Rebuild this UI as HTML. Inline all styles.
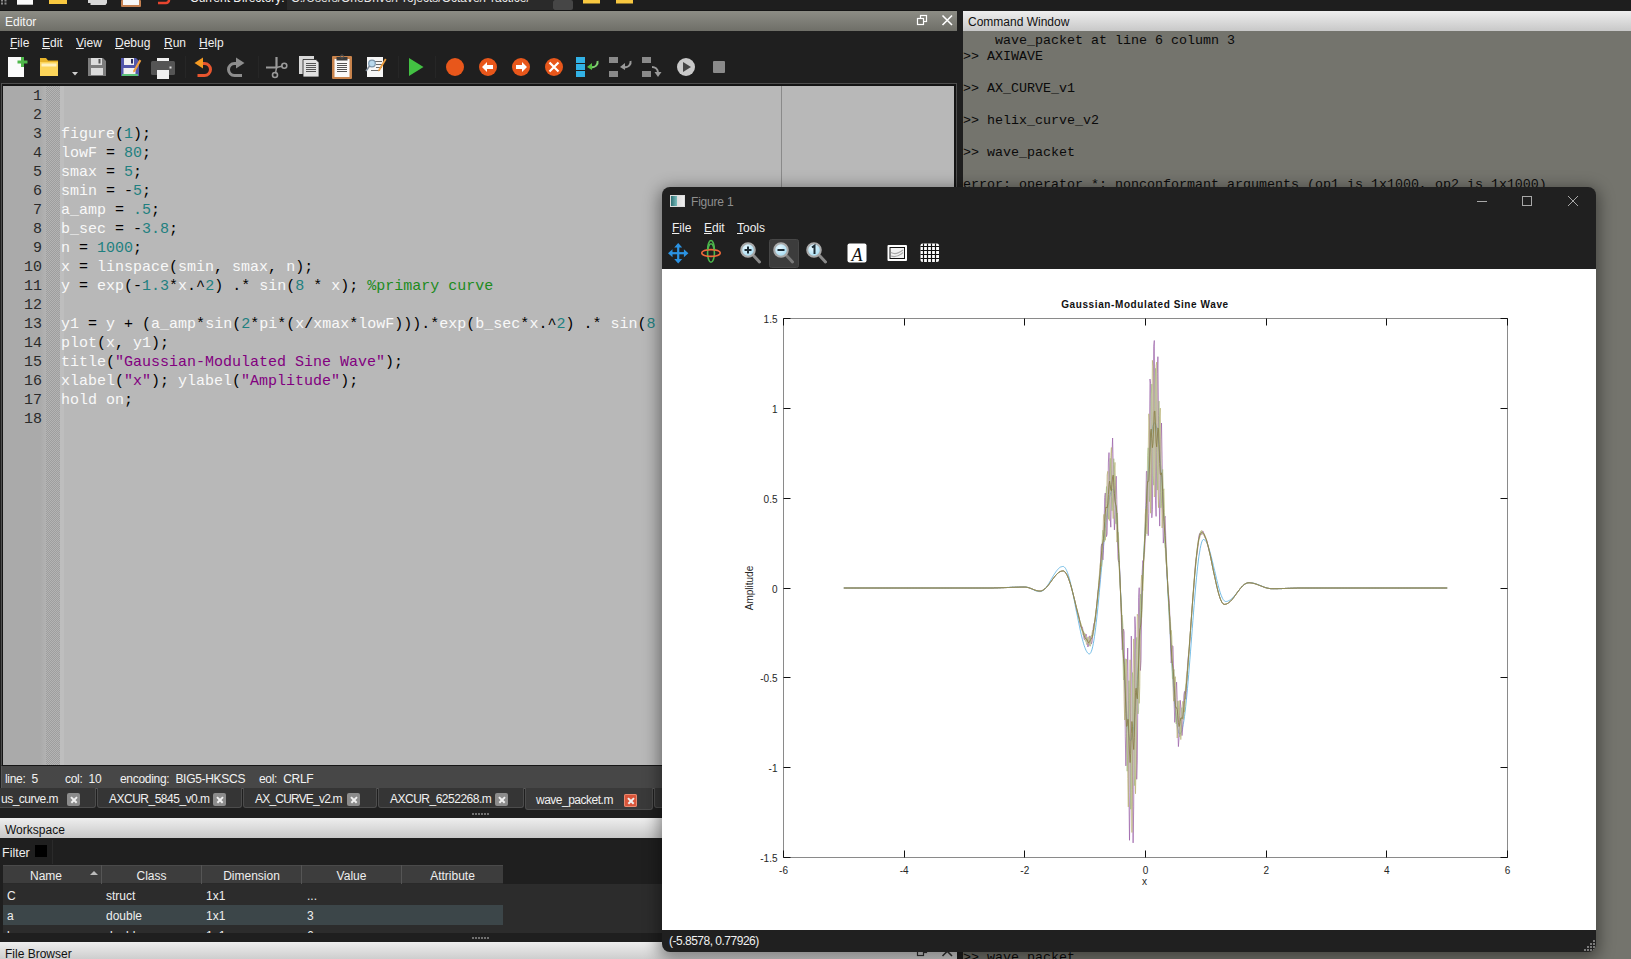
<!DOCTYPE html>
<html><head><meta charset="utf-8">
<style>
*{margin:0;padding:0;box-sizing:border-box}
html,body{width:1631px;height:959px;overflow:hidden;background:#1f1f1f;font-family:"Liberation Sans",sans-serif;position:relative}
.a{position:absolute}
.ttl{background:linear-gradient(#8d8d85,#6f6f68);color:#f6f6f6;font-size:12px;line-height:20px;padding-top:1px}
.ttlL{background:linear-gradient(#eeeeee,#c8c8c8);color:#111;font-size:12px;line-height:20px;padding-top:1px}
.menu span{position:absolute;color:#f0f0f0;font-size:12px;line-height:14px}
.menu span b{font-weight:normal;text-decoration:underline;text-underline-offset:1px}
.code{font-family:"Liberation Mono",monospace;font-size:15px;line-height:19px;white-space:pre;color:#f8f8f8}
.k{color:#000}.n{color:#1f8080}.s{color:#82007f}.c{color:#1d8b1d}
.cmd{font-family:"Liberation Mono",monospace;font-size:13.33px;line-height:16px;white-space:pre;color:#0a0a0a;padding-top:2px}
.ui{font-size:12px;color:#eee;white-space:pre}
.sb{letter-spacing:-0.3px}
.tab{position:absolute;top:788px;height:20px;background:#353535;border:1px solid #4c4c4c;border-top:none;border-radius:0 0 3px 3px}
.tab span{position:absolute;left:0;top:4px;font-size:12px;color:#f0f0f0;white-space:pre;letter-spacing:-0.5px}
.tab i{position:absolute;top:5px;width:13px;height:13px;background:#8c8c8c;border-radius:2px}
.tab i:before,.tab i:after{content:"";position:absolute;left:2.5px;top:5.75px;width:8px;height:1.5px;background:#f0f0f0;transform:rotate(45deg)}
.tab i:after{transform:rotate(-45deg)}
.th{position:absolute;top:0;height:19px;border-right:1px solid #555;font-size:12px;color:#eee;text-align:center;line-height:19px;padding-top:2px}
.td{position:absolute;font-size:12px;color:#eee;line-height:20px;white-space:pre;padding-top:1px}
</style></head><body>

<!-- top strip (main toolbar clipped) -->
<div class="a" style="left:0;top:0;width:1631px;height:11px;background:#1e1e1e"></div>
<svg class="a" style="left:0;top:0" width="660" height="11" viewBox="0 0 660 11">
 <g fill="#8a8a8a"><rect x="1" y="0" width="2" height="1.5"/><rect x="4.5" y="0" width="2" height="1.5"/><rect x="1" y="2.5" width="2" height="2"/><rect x="4.5" y="2.5" width="2" height="2"/></g>
 <rect x="17" y="0" width="16" height="4.7" fill="#fbfbfb"/>
 <rect x="49" y="0" width="18" height="4" fill="#f8c840"/>
 <path d="M88 0h19v3l-1.5 2h-15v-2h-2.5z" fill="#d8d8d8"/>
 <rect x="121" y="0" width="20" height="7" rx="1" fill="#c48050"/>
 <rect x="123" y="0" width="16" height="5" fill="#f8f8f8"/>
 <path d="M158 3h8a3 3 0 0 0 3-3" fill="none" stroke="#e8452e" stroke-width="2.5"/>
 <rect x="287" y="0" width="266" height="10" fill="#2a2a2a"/>
 <rect x="553" y="0" width="20" height="10" rx="2" fill="#464646"/>
 <rect x="583" y="0" width="17" height="3.5" fill="#f8c840"/>
 <rect x="616" y="0" width="17" height="3.5" fill="#f8c840"/>
 <g fill="#f0f0f0">
  <rect x="190" y="0" width="87" height="1.5" opacity=".0"/>
 </g>
</svg>
<div class="a" style="left:190px;top:-9px;font-size:12px;color:#f2f2f2;white-space:pre">Current Directory:</div>
<div class="a" style="left:291px;top:-9px;font-size:12px;color:#e8e8e8;white-space:pre;width:260px;overflow:hidden">C:/Users/OneDrive/Projects/Octave/Practice/</div>
<div class="a" style="left:0;top:10px;width:957px;height:1px;background:#151515"></div>


<!-- ================= EDITOR DOCK ================= -->
<div class="a ttl" style="left:0;top:11px;width:957px;height:20px;padding-left:5px">Editor</div>
<svg class="a" style="left:905px;top:11px" width="52" height="20" viewBox="905 11 52 20">
 <rect x="920.5" y="15.5" width="6" height="6" fill="none" stroke="#fff" stroke-width="1.2"/>
 <rect x="917.5" y="18.5" width="6" height="6" fill="#76766f" stroke="#fff" stroke-width="1.2"/>
 <path d="M942.5 15.5l9.5 9.5M952 15.5l-9.5 9.5" stroke="#fff" stroke-width="1.6"/>
</svg>

<div class="a menu" style="left:0;top:31px;width:957px;height:21px">
 <span style="left:10px;top:5px"><b>F</b>ile</span>
 <span style="left:42px;top:5px"><b>E</b>dit</span>
 <span style="left:76px;top:5px"><b>V</b>iew</span>
 <span style="left:115px;top:5px"><b>D</b>ebug</span>
 <span style="left:164px;top:5px"><b>R</b>un</span>
 <span style="left:199px;top:5px"><b>H</b>elp</span>
</div>
<svg class="a" style="left:0;top:50px" width="740" height="32" viewBox="0 50 740 32">
 <!-- new file -->
 <rect x="8" y="57" width="16" height="20" fill="#fbfbfb"/>
 <path d="M21 57h3v3.5h3.5v3h-3.5v3.5h-3v-3.5h-3.5v-3h3.5z" fill="#4fb84a"/>
 <!-- folder -->
 <path d="M40 58h6l2 2.5h10v15.5h-18z" fill="#e8b42a"/>
 <rect x="40" y="62" width="18" height="14" fill="#fcd55a"/>
 <rect x="41.5" y="63.5" width="15" height="3" fill="#fff4c8" opacity=".9"/>
 <!-- dropdown -->
 <path d="M72 72h6l-3 3.5z" fill="#cfcfcf"/>
 <!-- save grey -->
 <path d="M88 58h15l3 3v15h-18z" fill="#7d7d7d"/>
 <rect x="91" y="58" width="11" height="7" fill="#dcdcdc"/>
 <rect x="98.5" y="59" width="2" height="4.5" fill="#555"/>
 <rect x="91" y="68" width="12" height="7" fill="#dcdcdc"/>
 <!-- save as blue -->
 <path d="M121 58h15l3 3v15h-18z" fill="#5257aa"/>
 <rect x="124" y="58" width="10" height="7" fill="#f1f1f1"/>
 <rect x="131" y="59" width="2" height="4.5" fill="#2a2c60"/>
 <rect x="123.5" y="68" width="12" height="6" fill="#f1f1f1"/>
 <rect x="122" y="74" width="16" height="2" fill="#5cc47c"/>
 <path d="M139.5 59.5l1.8 1.2-6.3 11-1.8 0.8 0.1-2z" fill="#f0a040"/>
 <!-- print -->
 <rect x="157" y="58" width="12" height="5" fill="#f0f0f0"/>
 <rect x="151" y="61" width="24" height="14" rx="1.5" fill="#555"/>
 <rect x="157" y="70" width="12" height="9" fill="#f0f0f0"/>
 <rect x="169.5" y="66.5" width="2" height="2" fill="#ddd"/>
 <!-- separators -->
 <rect x="185" y="56" width="1" height="22" fill="#262626"/>
 <rect x="258" y="56" width="1" height="22" fill="#262626"/>
 <rect x="398" y="56" width="1" height="22" fill="#262626"/>
 <rect x="435" y="56" width="1" height="22" fill="#262626"/>
 <!-- undo -->
 <path d="M201 63.5h3.5a6 6 0 0 1 0 12h-7" fill="none" stroke="#e8552e" stroke-width="3"/>
 <path d="M194.5 63l8.5-5.5v11z" fill="#f49a22"/>
 <!-- redo -->
 <path d="M238 63.5h-3.5a6 6 0 0 0 0 12h7.5" fill="none" stroke="#8d8d8d" stroke-width="3"/>
 <path d="M244.5 63l-8.5-5.5v11z" fill="#8d8d8d"/>
 <!-- scissors -->
 <path d="M276.5 57v10.5h-10.5" fill="none" stroke="#9a9a9a" stroke-width="2.2"/>
 <path d="M276.5 67.5l6-1.5M276.5 67.5l-1 6" stroke="#9a9a9a" stroke-width="1.5"/>
 <circle cx="284.3" cy="65.8" r="2.5" fill="none" stroke="#9a9a9a" stroke-width="1.6"/>
 <circle cx="275" cy="75" r="2.5" fill="none" stroke="#9a9a9a" stroke-width="1.6"/>
 <!-- copy -->
 <rect x="299" y="56" width="15" height="18" fill="#d8d8d8"/>
 <path d="M303 59.5h13l3 3v14.5h-16z" fill="#e2e2e2" stroke="#1f1f1f" stroke-width=".8"/>
 <path d="M306 63.5h10M306 65.5h10M306 67.5h10M306 69.5h10M306 71.5h10" stroke="#555" stroke-width="1"/>
 <!-- paste -->
 <rect x="332" y="56" width="20" height="23" rx="1" fill="#c8834c"/>
 <rect x="334.5" y="59" width="15" height="18" fill="#fafafa"/>
 <rect x="336.5" y="57" width="11" height="3.5" fill="#3a3a3a"/>
 <circle cx="342" cy="56.5" r="1.6" fill="none" stroke="#555" stroke-width="1"/>
 <path d="M337 63.5h10M337 65.5h10M337 67.5h10M337 69.5h10M337 71.5h10" stroke="#555" stroke-width="1"/>
 <!-- find/replace -->
 <rect x="367" y="57" width="16" height="20" fill="#f6f6f6"/>
 <path d="M375 61.5h7M376 64.5h6M376 67.5h6M371 70.5h9" stroke="#6a6a6a" stroke-width="1"/>
 <circle cx="372" cy="63.5" r="3.3" fill="#b8d8ec" stroke="#7d97ad" stroke-width="1.2"/>
 <path d="M369.5 66l-3.5 5" stroke="#7d8a98" stroke-width="1.5"/>
 <path d="M385 58.5l1.5 1-6.5 11-1.8 1 .2-2z" fill="#f0a040"/>
 <!-- run -->
 <path d="M409 58v18l14.5-9z" fill="#43c143"/>
 <!-- debug circles -->
 <circle cx="455" cy="67" r="9" fill="#e8571b"/>
 <circle cx="488" cy="67" r="9" fill="#e8571b"/>
 <path d="M482 67l5-5v3h6v4h-6v3z" fill="#fff"/>
 <circle cx="521" cy="67" r="9" fill="#e8571b"/>
 <path d="M527 67l-5-5v3h-6v4h6v3z" fill="#fff"/>
 <circle cx="554" cy="67" r="9" fill="#e8571b"/>
 <path d="M549.5 62.5l9 9M558.5 62.5l-9 9" stroke="#fff" stroke-width="2.2"/>
 <!-- step blue -->
 <rect x="576" y="57" width="9" height="6" fill="#32b2e6"/>
 <rect x="576" y="64" width="9" height="6" fill="#32b2e6"/>
 <rect x="576" y="71" width="9" height="6" fill="#32b2e6"/>
 <path d="M597.5 61a5 5 0 0 1 -6 6" fill="none" stroke="#7ed070" stroke-width="2"/>
 <path d="M587 67l5-4v7z" fill="#55c040"/>
 <!-- step in grey -->
 <rect x="609" y="57" width="9" height="6" fill="#8a8a8a"/>
 <rect x="609" y="71" width="9" height="6" fill="#8a8a8a"/>
 <path d="M630.5 61a5 5 0 0 1 -6 6" fill="none" stroke="#9a9a9a" stroke-width="2"/>
 <path d="M620 67l5-4v7z" fill="#9a9a9a"/>
 <!-- step out grey -->
 <rect x="642" y="57" width="9" height="6" fill="#8a8a8a"/>
 <rect x="642" y="71" width="9" height="6" fill="#8a8a8a"/>
 <path d="M652 67a6 6 0 0 1 6 5" fill="none" stroke="#9a9a9a" stroke-width="2"/>
 <path d="M654.5 72h7l-3.5 5z" fill="#9a9a9a"/>
 <!-- continue -->
 <circle cx="686" cy="67" r="9" fill="#c9c9c9"/>
 <path d="M683 62v10l8-5z" fill="#444"/>
 <!-- stop -->
 <rect x="713" y="61" width="12" height="12" rx="1" fill="#8a8a8a"/>
</svg>


<!-- editor frame -->
<div class="a" style="left:1px;top:83px;width:956px;height:683px;background:#141414;border:1px solid #4e4e4e;border-bottom:none"></div>
<div class="a" style="left:3px;top:86px;width:951px;height:679px;background:#b8b8b8;overflow:hidden">
  <div class="a" style="left:0;top:0;width:43px;height:679px;background:linear-gradient(90deg,#aaaaaa 0,#aaaaaa 37px,#b2b2b2 43px)"></div>
  <div class="a" style="left:43px;top:0;width:14px;height:679px;background-color:#a9a9a9;background-image:repeating-conic-gradient(#9e9e9e 0 25%,#b4b4b4 0 50%);background-size:2px 2px"></div>
  <div class="a" style="left:57px;top:0;width:4px;height:679px;background:#bebebe"></div>
  <div class="a" style="left:778px;top:0;width:1px;height:679px;background:#8a8a8a"></div>
  <div class="a code" style="left:0;top:1px;width:39px;text-align:right;color:#2a2a2a">1
2
3
4
5
6
7
8
9
10
11
12
13
14
15
16
17
18</div>
  <div class="a code" style="left:58px;top:1px">

figure<span class="k">(</span><span class="n">1</span><span class="k">);</span>
lowF <span class="k">=</span> <span class="n">80</span><span class="k">;</span>
smax <span class="k">=</span> <span class="n">5</span><span class="k">;</span>
smin <span class="k">=</span> <span class="k">-</span><span class="n">5</span><span class="k">;</span>
a_amp <span class="k">=</span> <span class="n">.5</span><span class="k">;</span>
b_sec <span class="k">=</span> <span class="k">-</span><span class="n">3.8</span><span class="k">;</span>
n <span class="k">=</span> <span class="n">1000</span><span class="k">;</span>
x <span class="k">=</span> linspace<span class="k">(</span>smin<span class="k">,</span> smax<span class="k">,</span> n<span class="k">);</span>
y <span class="k">=</span> exp<span class="k">(-</span><span class="n">1.3</span><span class="k">*</span>x<span class="k">.^</span><span class="n">2</span><span class="k">)</span> <span class="k">.*</span> sin<span class="k">(</span><span class="n">8</span> <span class="k">*</span> x<span class="k">);</span> <span class="c">%primary curve</span>

y1 <span class="k">=</span> y <span class="k">+</span> <span class="k">(</span>a_amp<span class="k">*</span>sin<span class="k">(</span><span class="n">2</span><span class="k">*</span>pi<span class="k">*(</span>x<span class="k">/</span>xmax<span class="k">*</span>lowF<span class="k">))).*</span>exp<span class="k">(</span>b_sec<span class="k">*</span>x<span class="k">.^</span><span class="n">2</span><span class="k">)</span> <span class="k">.*</span> sin<span class="k">(</span><span class="n">8</span> <span class="k">*</span> x<span class="k">));</span>
plot<span class="k">(</span>x<span class="k">,</span> y1<span class="k">);</span>
title<span class="k">(</span><span class="s">"Gaussian-Modulated Sine Wave"</span><span class="k">);</span>
xlabel<span class="k">(</span><span class="s">"x"</span><span class="k">);</span> ylabel<span class="k">(</span><span class="s">"Amplitude"</span><span class="k">);</span>
hold on<span class="k">;</span>
</div>
</div>

<!-- status bar -->
<div class="a" style="left:1px;top:765px;width:956px;height:24px;background:#474747;border:1px solid #575757;border-top:1px solid #161616"></div>
<div class="a ui sb" style="left:5px;top:772px;color:#f2f2f2">line:  5</div>
<div class="a ui sb" style="left:65px;top:772px;color:#f2f2f2">col:  10</div>
<div class="a ui sb" style="left:120px;top:772px;color:#f2f2f2">encoding:  BIG5-HKSCS</div>
<div class="a ui sb" style="left:259px;top:772px;color:#f2f2f2">eol:  CRLF</div>

<!-- tabs -->
<div class="tab" style="left:-4px;width:100px"><span style="left:4px">us_curve.m</span><i style="left:70px"></i></div>
<div class="tab" style="left:97px;width:145px"><span style="left:11px">AXCUR_5845_v0.m</span><i style="left:115px"></i></div>
<div class="tab" style="left:243px;width:134px"><span style="left:11px;letter-spacing:-0.8px">AX_CURVE_v2.m</span><i style="left:103px"></i></div>
<div class="tab" style="left:378px;width:146px"><span style="left:11px">AXCUR_6252268.m</span><i style="left:116px"></i></div>
<div class="tab" style="left:525px;top:788px;height:22px;width:128px;background:#3a3a3a"><span style="left:10px;top:5px">wave_packet.m</span><i style="left:98px;top:6px;background:#d9553a;box-shadow:0 0 0 1px #e88a70 inset"></i></div>
<div class="tab" style="left:654px;width:30px"></div>
<div class="a" style="left:472px;top:813px;width:18px;height:2px;background-image:linear-gradient(90deg,#707070 66%,transparent 66%);background-size:3px 2px"></div>

<!-- workspace -->
<div class="a ttlL" style="left:0;top:818px;width:957px;height:20px;padding-left:5px;padding-top:2px">Workspace</div>
<div class="a ui" style="left:2px;top:846px;font-size:12.5px">Filter</div>
<div class="a" style="left:35px;top:845px;width:12px;height:12px;background:#000"></div>
<div class="a" style="left:52px;top:840px;width:1px;height:24px;background:#2a2a2a"></div>
<div class="a" style="left:3px;top:865px;width:954px;height:68px;background:#2c2c2c;overflow:hidden">
  <div class="a" style="left:500px;top:0;width:454px;height:19px;background:#1f1f1f"></div>
  <div class="a" style="left:0;top:0;width:500px;height:19px;background:#3d3d3d;border-top:1px solid #4a4a4a;border-bottom:1px solid #2a2a2a"></div>
  <div class="th" style="left:0;width:99px;padding-right:12px">Name</div>
  <div class="a" style="left:87px;top:6px;width:0;height:0;border-left:4px solid transparent;border-right:4px solid transparent;border-bottom:4px solid #bbb"></div>
  <div class="th" style="left:99px;width:100px">Class</div>
  <div class="th" style="left:199px;width:100px">Dimension</div>
  <div class="th" style="left:299px;width:100px">Value</div>
  <div class="th" style="left:399px;width:101px;border-right:none">Attribute</div>
  <div class="a" style="left:0;top:40px;width:500px;height:20px;background:#3c4649"></div>
  <div class="td" style="left:4px;top:20px">C</div><div class="td" style="left:103px;top:20px">struct</div><div class="td" style="left:203px;top:20px">1x1</div><div class="td" style="left:304px;top:20px">...</div>
  <div class="td" style="left:4px;top:40px">a</div><div class="td" style="left:103px;top:40px">double</div><div class="td" style="left:203px;top:40px">1x1</div><div class="td" style="left:304px;top:40px">3</div>
  <div class="td" style="left:4px;top:60px">b</div><div class="td" style="left:103px;top:60px">double</div><div class="td" style="left:203px;top:60px">1x1</div><div class="td" style="left:304px;top:60px">6</div>
</div>
<div class="a" style="left:472px;top:937px;width:18px;height:2px;background-image:linear-gradient(90deg,#707070 66%,transparent 66%);background-size:3px 2px"></div>

<!-- file browser title -->
<div class="a ttlL" style="left:0;top:942px;width:957px;height:20px;padding-left:5px;padding-top:2px">File Browser</div>
<svg class="a" style="left:905px;top:942px" width="52" height="17" viewBox="905 942 52 17">
 <rect x="920.5" y="946.5" width="6" height="6" fill="none" stroke="#333" stroke-width="1.2"/>
 <rect x="917.5" y="949.5" width="6" height="6" fill="#d4d4d4" stroke="#333" stroke-width="1.2"/>
 <path d="M942.5 946.5l9.5 9.5M952 946.5l-9.5 9.5" stroke="#333" stroke-width="1.6"/>
</svg>

<!-- ================= COMMAND WINDOW ================= -->
<div class="a ttlL" style="left:963px;top:11px;width:668px;height:20px;padding-left:5px">Command Window</div>
<div class="a" style="left:963px;top:31px;width:668px;height:928px;background:#74746d;overflow:hidden">
<div class="a cmd" style="left:0;top:0">    wave_packet at line 6 column 3
&gt;&gt; AXIWAVE

&gt;&gt; AX_CURVE_v1

&gt;&gt; helix_curve_v2

&gt;&gt; wave_packet

error: operator *: nonconformant arguments (op1 is 1x1000, op2 is 1x1000)</div>
<div class="a cmd" style="left:0;top:917px">&gt;&gt; wave_packet</div>
</div>

<!-- ================= FIGURE WINDOW ================= -->
<div class="a" style="left:662px;top:187px;width:934px;height:765px;background:#202020;border-radius:8px;box-shadow:0 4px 16px 3px rgba(0,0,0,.42);overflow:hidden">
  <div class="a" style="left:8px;top:8px;width:15px;height:12px;background:linear-gradient(90deg,#2f6f73 0,#7bb 45%,#ddd 50%,#eee 100%);border:1px solid #ddd"></div>
  <div class="a" style="left:29px;top:8px;font-size:12px;color:#8f8f8f;letter-spacing:-0.2px">Figure 1</div>
  <div class="a" style="left:815px;top:14px;width:10px;height:1px;background:#a8a8a8"></div>
  <div class="a" style="left:860px;top:9px;width:10px;height:10px;border:1px solid #a8a8a8"></div>
  <svg class="a" style="left:900px;top:5px" width="30" height="20" viewBox="1562 192 30 20">
 <path d="M1568 196l10 10M1578 196l-10 10" stroke="#a8a8a8" stroke-width="1"/>
</svg>

  <div class="a menu" style="left:0;top:28px;width:934px;height:25px">
    <span style="left:10px;top:6px"><b>F</b>ile</span>
    <span style="left:42px;top:6px"><b>E</b>dit</span>
    <span style="left:75px;top:6px"><b>T</b>ools</span>
  </div>
  <svg class="a" style="left:0;top:51px" width="300" height="30" viewBox="662 238 300 30">
 <defs>
  <radialGradient id="lens" cx="40%" cy="35%" r="70%"><stop offset="0" stop-color="#e8f8ff"/><stop offset="1" stop-color="#9ed8f0"/></radialGradient>
 </defs>
 <!-- move -->
 <g fill="#2b93e3">
  <rect x="677.1" y="246" width="2.2" height="14"/>
  <rect x="671" y="252.1" width="14" height="2.2"/>
  <path d="M678.2 243l4 4.5h-8z M678.2 263.4l4-4.5h-8z M668 253.2l4.5-4v8z M688.4 253.2l-4.5-4v8z"/>
 </g>
 <!-- rotate -->
 <ellipse cx="711" cy="253" rx="3.4" ry="9.3" fill="none" stroke="#4cb64c" stroke-width="1.6"/>
 <ellipse cx="711" cy="253" rx="9.3" ry="3.4" fill="none" stroke="#f26a3a" stroke-width="1.6"/>
 <path d="M707.6 249.8a3.4 9.3 0 0 1 6.8 0" fill="none" stroke="#4cb64c" stroke-width="1.6"/>
 <!-- pressed button -->
 <rect x="769.5" y="239.5" width="29" height="28" rx="2" fill="#3c3c3c" stroke="#474747"/>
 <!-- zoom in -->
 <path d="M753.5 255.5l6 6.5" stroke="#8a8a8a" stroke-width="3" stroke-linecap="round"/>
 <circle cx="748" cy="250" r="6.8" fill="url(#lens)" stroke="#a9a9a9" stroke-width="2"/>
 <path d="M744.5 250h7M748 246.5v7" stroke="#1b2a33" stroke-width="2"/>
 <!-- zoom out -->
 <path d="M786.5 255.5l6 6.5" stroke="#7a7a7a" stroke-width="3" stroke-linecap="round"/>
 <circle cx="781" cy="250" r="6.8" fill="url(#lens)" stroke="#a9a9a9" stroke-width="2"/>
 <path d="M777.5 250h7" stroke="#1b2a33" stroke-width="2"/>
 <!-- zoom 1 -->
 <path d="M819.5 255.5l6 6.5" stroke="#8a8a8a" stroke-width="3" stroke-linecap="round"/>
 <circle cx="814" cy="250" r="6.8" fill="url(#lens)" stroke="#a9a9a9" stroke-width="2"/>
 <path d="M812 247.5l2.5-1.8v8.3" fill="none" stroke="#1b2a33" stroke-width="2"/>
 <!-- text A -->
 <rect x="847.5" y="243.5" width="19" height="19" rx="2" fill="#fff"/>
 <text x="857" y="260.5" text-anchor="middle" font-family="Liberation Serif" font-style="italic" font-size="18" fill="#111">A</text>
 <!-- image -->
 <rect x="887.5" y="245" width="19.5" height="16" rx="1" fill="#fff"/>
 <rect x="889.5" y="247" width="15.5" height="12" fill="#111"/>
 <rect x="890.5" y="248" width="13.5" height="10" fill="#f2f2f2"/>
 <path d="M891 252.5q5 3 12-2.5M891 256q6 2 12-3.5" fill="none" stroke="#aaa" stroke-width="1.2"/>
 <!-- grid -->
 <rect x="920.5" y="243.5" width="18.5" height="18.5" rx="2" fill="#fff"/>
 <path d="M923.5 243.5v18.5M927.5 243.5v18.5M931.5 243.5v18.5M935.5 243.5v18.5M920.5 246.5h18.5M920.5 250.5h18.5M920.5 254.5h18.5M920.5 258.5h18.5" stroke="#111" stroke-width="1.2"/>
</svg>

  <div class="a" style="left:0;top:82px;width:934px;height:661px;background:#fff">
  <svg class="a" style="left:0;top:0" width="934" height="661" viewBox="662 269 934 661" font-family="Liberation Sans">
<polyline fill="none" stroke="#55aee0" stroke-opacity="0.9" stroke-width="0.9" points="843.8,588.0 844.4,588.0 845.0,588.0 845.6,588.0 846.2,588.0 846.9,588.0 847.5,588.0 848.1,588.0 848.7,588.0 849.3,588.0 849.9,588.0 850.5,588.0 851.1,588.0 851.7,588.0 852.3,588.0 852.9,588.0 853.5,588.0 854.1,588.0 854.7,588.0 855.3,588.0 855.9,588.0 856.5,588.0 857.1,588.0 857.7,588.0 858.3,588.0 858.9,588.0 859.5,588.0 860.1,588.0 860.7,588.0 861.3,588.0 862.0,588.0 862.6,588.0 863.2,588.0 863.8,588.0 864.4,588.0 865.0,588.0 865.6,588.0 866.2,588.0 866.8,588.0 867.4,588.0 868.0,588.0 868.6,588.0 869.2,588.0 869.8,588.0 870.4,588.0 871.0,588.0 871.6,588.0 872.2,588.0 872.8,588.0 873.4,588.0 874.0,588.0 874.6,588.0 875.2,588.0 875.8,588.0 876.4,588.0 877.0,588.0 877.7,588.0 878.3,588.0 878.9,588.0 879.5,588.0 880.1,588.0 880.7,588.0 881.3,588.0 881.9,588.0 882.5,588.0 883.1,588.0 883.7,588.0 884.3,588.0 884.9,588.0 885.5,588.0 886.1,588.0 886.7,588.0 887.3,588.0 887.9,588.0 888.5,588.0 889.1,588.0 889.7,588.0 890.3,588.0 890.9,588.0 891.5,588.0 892.1,588.0 892.8,588.0 893.4,588.0 894.0,588.0 894.6,588.0 895.2,588.0 895.8,588.0 896.4,588.0 897.0,588.0 897.6,588.0 898.2,588.0 898.8,588.0 899.4,588.0 900.0,588.0 900.6,588.0 901.2,588.0 901.8,588.0 902.4,588.0 903.0,588.0 903.6,588.0 904.2,588.0 904.8,588.0 905.4,588.0 906.0,588.0 906.6,588.0 907.2,588.0 907.9,588.0 908.5,588.0 909.1,588.0 909.7,588.0 910.3,588.0 910.9,588.0 911.5,588.0 912.1,588.0 912.7,588.0 913.3,588.0 913.9,588.0 914.5,588.0 915.1,588.0 915.7,588.0 916.3,588.0 916.9,588.0 917.5,588.0 918.1,588.0 918.7,588.0 919.3,588.0 919.9,588.0 920.5,588.0 921.1,588.0 921.7,588.0 922.3,588.0 922.9,588.0 923.6,588.0 924.2,588.0 924.8,588.0 925.4,588.0 926.0,588.0 926.6,588.0 927.2,588.0 927.8,588.0 928.4,588.0 929.0,588.0 929.6,588.0 930.2,588.0 930.8,588.0 931.4,588.0 932.0,588.0 932.6,588.0 933.2,588.0 933.8,588.0 934.4,588.0 935.0,588.0 935.6,588.0 936.2,588.0 936.8,588.0 937.4,588.0 938.0,588.0 938.7,588.0 939.3,588.0 939.9,588.0 940.5,588.0 941.1,588.0 941.7,588.0 942.3,588.0 942.9,588.0 943.5,588.0 944.1,588.0 944.7,588.0 945.3,588.0 945.9,588.0 946.5,588.0 947.1,588.0 947.7,588.0 948.3,588.0 948.9,588.0 949.5,588.0 950.1,588.0 950.7,588.0 951.3,588.0 951.9,588.0 952.5,588.0 953.1,588.0 953.7,588.0 954.4,588.0 955.0,588.0 955.6,588.0 956.2,588.0 956.8,588.0 957.4,588.0 958.0,588.0 958.6,588.0 959.2,588.0 959.8,588.0 960.4,588.0 961.0,588.0 961.6,588.0 962.2,588.0 962.8,588.0 963.4,588.0 964.0,588.0 964.6,588.0 965.2,588.0 965.8,588.0 966.4,588.0 967.0,588.0 967.6,588.0 968.2,588.0 968.8,588.0 969.5,588.0 970.1,588.0 970.7,588.0 971.3,588.0 971.9,588.0 972.5,588.0 973.1,588.0 973.7,588.0 974.3,588.0 974.9,588.0 975.5,588.0 976.1,588.0 976.7,588.0 977.3,588.0 977.9,588.0 978.5,588.0 979.1,588.0 979.7,588.0 980.3,588.0 980.9,588.0 981.5,588.0 982.1,588.0 982.7,588.0 983.3,588.0 983.9,588.0 984.6,588.0 985.2,588.0 985.8,588.0 986.4,588.0 987.0,588.0 987.6,588.0 988.2,588.0 988.8,588.0 989.4,588.0 990.0,588.0 990.6,588.0 991.2,588.0 991.8,588.0 992.4,588.0 993.0,588.0 993.6,588.0 994.2,587.9 994.8,587.9 995.4,587.9 996.0,587.9 996.6,587.9 997.2,587.9 997.8,587.8 998.4,587.8 999.0,587.8 999.6,587.8 1000.3,587.7 1000.9,587.7 1001.5,587.7 1002.1,587.7 1002.7,587.6 1003.3,587.6 1003.9,587.6 1004.5,587.6 1005.1,587.5 1005.7,587.5 1006.3,587.5 1006.9,587.5 1007.5,587.4 1008.1,587.4 1008.7,587.4 1009.3,587.3 1009.9,587.3 1010.5,587.3 1011.1,587.3 1011.7,587.2 1012.3,587.2 1012.9,587.2 1013.5,587.2 1014.1,587.1 1014.7,587.1 1015.4,587.1 1016.0,587.1 1016.6,587.1 1017.2,587.0 1017.8,587.0 1018.4,587.0 1019.0,587.0 1019.6,587.0 1020.2,587.0 1020.8,587.0 1021.4,586.9 1022.0,586.9 1022.6,586.9 1023.2,586.9 1023.8,586.9 1024.4,586.9 1025.0,586.9 1025.6,587.0 1026.2,587.0 1026.8,587.1 1027.4,587.3 1028.0,587.4 1028.6,587.6 1029.2,587.8 1029.8,588.1 1030.4,588.3 1031.1,588.6 1031.7,588.9 1032.3,589.2 1032.9,589.5 1033.5,589.8 1034.1,590.1 1034.7,590.3 1035.3,590.6 1035.9,590.8 1036.5,591.0 1037.1,591.2 1037.7,591.3 1038.3,591.5 1038.9,591.5 1039.5,591.6 1040.1,591.6 1040.7,591.5 1041.3,591.4 1041.9,591.1 1042.5,590.8 1043.1,590.4 1043.7,589.9 1044.3,589.4 1044.9,588.7 1045.5,588.0 1046.2,587.3 1046.8,586.5 1047.4,585.6 1048.0,584.7 1048.6,583.8 1049.2,582.8 1049.8,581.8 1050.4,580.8 1051.0,579.7 1051.6,578.7 1052.2,577.7 1052.8,576.6 1053.4,575.6 1054.0,574.7 1054.6,573.7 1055.2,572.8 1055.8,571.9 1056.4,571.1 1057.0,570.3 1057.6,569.6 1058.2,568.9 1058.8,568.3 1059.4,567.8 1060.0,567.4 1060.6,567.0 1061.3,566.8 1061.9,566.6 1062.5,566.5 1063.1,566.4 1063.7,566.6 1064.3,567.0 1064.9,567.6 1065.5,568.4 1066.1,569.5 1066.7,570.7 1067.3,572.2 1067.9,573.8 1068.5,575.6 1069.1,577.6 1069.7,579.8 1070.3,582.1 1070.9,584.6 1071.5,587.2 1072.1,589.9 1072.7,592.7 1073.3,595.6 1073.9,598.6 1074.5,601.6 1075.1,604.7 1075.7,607.8 1076.3,610.9 1077.0,614.0 1077.6,617.1 1078.2,620.2 1078.8,623.2 1079.4,626.1 1080.0,629.0 1080.6,631.8 1081.2,634.4 1081.8,637.0 1082.4,639.4 1083.0,641.6 1083.6,643.7 1084.2,645.6 1084.8,647.4 1085.4,648.9 1086.0,650.3 1086.6,651.4 1087.2,652.3 1087.8,653.1 1088.4,653.6 1089.0,653.9 1089.6,653.9 1090.2,653.5 1090.8,652.6 1091.4,651.2 1092.1,649.2 1092.7,646.7 1093.3,643.7 1093.9,640.3 1094.5,636.4 1095.1,632.0 1095.7,627.3 1096.3,622.2 1096.9,616.8 1097.5,611.1 1098.1,605.1 1098.7,598.9 1099.3,592.5 1099.9,586.0 1100.5,579.4 1101.1,572.7 1101.7,566.0 1102.3,559.4 1102.9,552.9 1103.5,546.4 1104.1,540.2 1104.7,534.1 1105.3,528.3 1105.9,522.7 1106.5,517.5 1107.1,512.7 1107.8,508.2 1108.4,504.1 1109.0,500.5 1109.6,497.4 1110.2,494.7 1110.8,492.6 1111.4,490.9 1112.0,489.8 1112.6,489.3 1113.2,489.3 1113.8,490.7 1114.4,493.6 1115.0,497.9 1115.6,503.5 1116.2,510.5 1116.8,518.7 1117.4,528.0 1118.0,538.3 1118.6,549.6 1119.2,561.6 1119.8,574.2 1120.4,587.4 1121.0,600.8 1121.6,614.4 1122.2,628.0 1122.9,641.5 1123.5,654.6 1124.1,667.3 1124.7,679.4 1125.3,690.7 1125.9,701.1 1126.5,710.5 1127.1,718.8 1127.7,725.9 1128.3,731.6 1128.9,736.0 1129.5,739.0 1130.1,740.5 1130.7,740.6 1131.3,739.6 1131.9,737.7 1132.5,734.8 1133.1,731.0 1133.7,726.2 1134.3,720.6 1134.9,714.0 1135.5,706.7 1136.1,698.6 1136.7,689.8 1137.3,680.3 1138.0,670.2 1138.6,659.5 1139.2,648.4 1139.8,636.9 1140.4,625.0 1141.0,612.8 1141.6,600.5 1142.2,588.0 1142.8,575.5 1143.4,563.1 1144.0,550.7 1144.6,538.6 1145.2,526.7 1145.8,515.1 1146.4,504.0 1147.0,493.3 1147.6,483.2 1148.2,473.7 1148.8,464.9 1149.4,456.8 1150.0,449.5 1150.6,442.9 1151.2,437.3 1151.8,432.5 1152.4,428.6 1153.0,425.7 1153.7,423.8 1154.3,422.8 1154.9,422.8 1155.5,423.7 1156.1,425.5 1156.7,428.1 1157.3,431.5 1157.9,435.8 1158.5,440.9 1159.1,446.7 1159.7,453.3 1160.3,460.6 1160.9,468.5 1161.5,477.1 1162.1,486.2 1162.7,495.8 1163.3,505.9 1163.9,516.5 1164.5,527.3 1165.1,538.5 1165.7,549.8 1166.3,561.4 1166.9,573.0 1167.5,584.6 1168.1,596.3 1168.8,607.8 1169.4,619.1 1170.0,630.3 1170.6,641.1 1171.2,651.6 1171.8,661.6 1172.4,671.3 1173.0,680.3 1173.6,688.9 1174.2,696.8 1174.8,704.0 1175.4,710.5 1176.0,716.3 1176.6,721.3 1177.2,725.5 1177.8,728.9 1178.4,731.5 1179.0,733.2 1179.6,734.0 1180.2,734.0 1180.8,733.3 1181.4,732.0 1182.0,730.1 1182.6,727.6 1183.2,724.5 1183.9,720.8 1184.5,716.6 1185.1,711.8 1185.7,706.6 1186.3,700.9 1186.9,694.8 1187.5,688.3 1188.1,681.5 1188.7,674.4 1189.3,667.0 1189.9,659.5 1190.5,651.8 1191.1,644.0 1191.7,636.2 1192.3,628.3 1192.9,620.6 1193.5,612.9 1194.1,605.4 1194.7,598.1 1195.3,591.0 1195.9,584.2 1196.5,577.8 1197.1,571.8 1197.7,566.1 1198.3,561.0 1198.9,556.3 1199.6,552.2 1200.2,548.6 1200.8,545.6 1201.4,543.1 1202.0,541.3 1202.6,540.1 1203.2,539.5 1203.8,539.5 1204.4,539.8 1205.0,540.2 1205.6,540.9 1206.2,541.8 1206.8,542.9 1207.4,544.2 1208.0,545.7 1208.6,547.4 1209.2,549.2 1209.8,551.2 1210.4,553.4 1211.0,555.6 1211.6,558.0 1212.2,560.4 1212.8,563.0 1213.4,565.5 1214.0,568.2 1214.7,570.8 1215.3,573.4 1215.9,576.0 1216.5,578.6 1217.1,581.1 1217.7,583.5 1218.3,585.9 1218.9,588.1 1219.5,590.2 1220.1,592.2 1220.7,594.0 1221.3,595.6 1221.9,597.0 1222.5,598.3 1223.1,599.4 1223.7,600.2 1224.3,600.8 1224.9,601.3 1225.5,601.5 1226.1,601.5 1226.7,601.4 1227.3,601.3 1227.9,601.1 1228.5,600.8 1229.1,600.5 1229.7,600.2 1230.4,599.7 1231.0,599.3 1231.6,598.8 1232.2,598.2 1232.8,597.6 1233.4,597.0 1234.0,596.3 1234.6,595.6 1235.2,594.9 1235.8,594.2 1236.4,593.4 1237.0,592.7 1237.6,591.9 1238.2,591.2 1238.8,590.4 1239.4,589.7 1240.0,588.9 1240.6,588.2 1241.2,587.6 1241.8,586.9 1242.4,586.3 1243.0,585.7 1243.6,585.2 1244.2,584.7 1244.8,584.2 1245.5,583.8 1246.1,583.5 1246.7,583.2 1247.3,582.9 1247.9,582.8 1248.5,582.7 1249.1,582.6 1249.7,582.6 1250.3,582.6 1250.9,582.7 1251.5,582.7 1252.1,582.8 1252.7,582.9 1253.3,583.1 1253.9,583.2 1254.5,583.4 1255.1,583.5 1255.7,583.7 1256.3,583.9 1256.9,584.1 1257.5,584.4 1258.1,584.6 1258.7,584.8 1259.3,585.1 1259.9,585.3 1260.6,585.6 1261.2,585.8 1261.8,586.1 1262.4,586.3 1263.0,586.6 1263.6,586.8 1264.2,587.1 1264.8,587.3 1265.4,587.5 1266.0,587.7 1266.6,587.9 1267.2,588.0 1267.8,588.2 1268.4,588.3 1269.0,588.4 1269.6,588.5 1270.2,588.6 1270.8,588.7 1271.4,588.7 1272.0,588.7 1272.6,588.7 1273.2,588.7 1273.8,588.7 1274.4,588.7 1275.0,588.7 1275.6,588.7 1276.3,588.7 1276.9,588.7 1277.5,588.7 1278.1,588.7 1278.7,588.6 1279.3,588.6 1279.9,588.6 1280.5,588.6 1281.1,588.6 1281.7,588.6 1282.3,588.5 1282.9,588.5 1283.5,588.5 1284.1,588.5 1284.7,588.5 1285.3,588.4 1285.9,588.4 1286.5,588.4 1287.1,588.4 1287.7,588.3 1288.3,588.3 1288.9,588.3 1289.5,588.3 1290.1,588.3 1290.7,588.2 1291.4,588.2 1292.0,588.2 1292.6,588.2 1293.2,588.2 1293.8,588.1 1294.4,588.1 1295.0,588.1 1295.6,588.1 1296.2,588.1 1296.8,588.1 1297.4,588.0 1298.0,588.0 1298.6,588.0 1299.2,588.0 1299.8,588.0 1300.4,588.0 1301.0,588.0 1301.6,588.0 1302.2,588.0 1302.8,588.0 1303.4,588.0 1304.0,588.0 1304.6,588.0 1305.2,588.0 1305.8,588.0 1306.4,588.0 1307.1,588.0 1307.7,588.0 1308.3,588.0 1308.9,588.0 1309.5,588.0 1310.1,588.0 1310.7,588.0 1311.3,588.0 1311.9,588.0 1312.5,588.0 1313.1,588.0 1313.7,588.0 1314.3,588.0 1314.9,588.0 1315.5,588.0 1316.1,588.0 1316.7,588.0 1317.3,588.0 1317.9,588.0 1318.5,588.0 1319.1,588.0 1319.7,588.0 1320.3,588.0 1320.9,588.0 1321.5,588.0 1322.2,588.0 1322.8,588.0 1323.4,588.0 1324.0,588.0 1324.6,588.0 1325.2,588.0 1325.8,588.0 1326.4,588.0 1327.0,588.0 1327.6,588.0 1328.2,588.0 1328.8,588.0 1329.4,588.0 1330.0,588.0 1330.6,588.0 1331.2,588.0 1331.8,588.0 1332.4,588.0 1333.0,588.0 1333.6,588.0 1334.2,588.0 1334.8,588.0 1335.4,588.0 1336.0,588.0 1336.6,588.0 1337.3,588.0 1337.9,588.0 1338.5,588.0 1339.1,588.0 1339.7,588.0 1340.3,588.0 1340.9,588.0 1341.5,588.0 1342.1,588.0 1342.7,588.0 1343.3,588.0 1343.9,588.0 1344.5,588.0 1345.1,588.0 1345.7,588.0 1346.3,588.0 1346.9,588.0 1347.5,588.0 1348.1,588.0 1348.7,588.0 1349.3,588.0 1349.9,588.0 1350.5,588.0 1351.1,588.0 1351.7,588.0 1352.3,588.0 1353.0,588.0 1353.6,588.0 1354.2,588.0 1354.8,588.0 1355.4,588.0 1356.0,588.0 1356.6,588.0 1357.2,588.0 1357.8,588.0 1358.4,588.0 1359.0,588.0 1359.6,588.0 1360.2,588.0 1360.8,588.0 1361.4,588.0 1362.0,588.0 1362.6,588.0 1363.2,588.0 1363.8,588.0 1364.4,588.0 1365.0,588.0 1365.6,588.0 1366.2,588.0 1366.8,588.0 1367.4,588.0 1368.1,588.0 1368.7,588.0 1369.3,588.0 1369.9,588.0 1370.5,588.0 1371.1,588.0 1371.7,588.0 1372.3,588.0 1372.9,588.0 1373.5,588.0 1374.1,588.0 1374.7,588.0 1375.3,588.0 1375.9,588.0 1376.5,588.0 1377.1,588.0 1377.7,588.0 1378.3,588.0 1378.9,588.0 1379.5,588.0 1380.1,588.0 1380.7,588.0 1381.3,588.0 1381.9,588.0 1382.5,588.0 1383.1,588.0 1383.8,588.0 1384.4,588.0 1385.0,588.0 1385.6,588.0 1386.2,588.0 1386.8,588.0 1387.4,588.0 1388.0,588.0 1388.6,588.0 1389.2,588.0 1389.8,588.0 1390.4,588.0 1391.0,588.0 1391.6,588.0 1392.2,588.0 1392.8,588.0 1393.4,588.0 1394.0,588.0 1394.6,588.0 1395.2,588.0 1395.8,588.0 1396.4,588.0 1397.0,588.0 1397.6,588.0 1398.2,588.0 1398.9,588.0 1399.5,588.0 1400.1,588.0 1400.7,588.0 1401.3,588.0 1401.9,588.0 1402.5,588.0 1403.1,588.0 1403.7,588.0 1404.3,588.0 1404.9,588.0 1405.5,588.0 1406.1,588.0 1406.7,588.0 1407.3,588.0 1407.9,588.0 1408.5,588.0 1409.1,588.0 1409.7,588.0 1410.3,588.0 1410.9,588.0 1411.5,588.0 1412.1,588.0 1412.7,588.0 1413.3,588.0 1414.0,588.0 1414.6,588.0 1415.2,588.0 1415.8,588.0 1416.4,588.0 1417.0,588.0 1417.6,588.0 1418.2,588.0 1418.8,588.0 1419.4,588.0 1420.0,588.0 1420.6,588.0 1421.2,588.0 1421.8,588.0 1422.4,588.0 1423.0,588.0 1423.6,588.0 1424.2,588.0 1424.8,588.0 1425.4,588.0 1426.0,588.0 1426.6,588.0 1427.2,588.0 1427.8,588.0 1428.4,588.0 1429.0,588.0 1429.7,588.0 1430.3,588.0 1430.9,588.0 1431.5,588.0 1432.1,588.0 1432.7,588.0 1433.3,588.0 1433.9,588.0 1434.5,588.0 1435.1,588.0 1435.7,588.0 1436.3,588.0 1436.9,588.0 1437.5,588.0 1438.1,588.0 1438.7,588.0 1439.3,588.0 1439.9,588.0 1440.5,588.0 1441.1,588.0 1441.7,588.0 1442.3,588.0 1442.9,588.0 1443.5,588.0 1444.1,588.0 1444.8,588.0 1445.4,588.0 1446.0,588.0 1446.6,588.0 1447.2,588.0"/>
<polyline fill="none" stroke="#9a62a8" stroke-opacity="0.8" stroke-width="0.9" points="843.8,588.0 844.4,588.0 845.0,588.0 845.6,588.0 846.2,588.0 846.9,588.0 847.5,588.0 848.1,588.0 848.7,588.0 849.3,588.0 849.9,588.0 850.5,588.0 851.1,588.0 851.7,588.0 852.3,588.0 852.9,588.0 853.5,588.0 854.1,588.0 854.7,588.0 855.3,588.0 855.9,588.0 856.5,588.0 857.1,588.0 857.7,588.0 858.3,588.0 858.9,588.0 859.5,588.0 860.1,588.0 860.7,588.0 861.3,588.0 862.0,588.0 862.6,588.0 863.2,588.0 863.8,588.0 864.4,588.0 865.0,588.0 865.6,588.0 866.2,588.0 866.8,588.0 867.4,588.0 868.0,588.0 868.6,588.0 869.2,588.0 869.8,588.0 870.4,588.0 871.0,588.0 871.6,588.0 872.2,588.0 872.8,588.0 873.4,588.0 874.0,588.0 874.6,588.0 875.2,588.0 875.8,588.0 876.4,588.0 877.0,588.0 877.7,588.0 878.3,588.0 878.9,588.0 879.5,588.0 880.1,588.0 880.7,588.0 881.3,588.0 881.9,588.0 882.5,588.0 883.1,588.0 883.7,588.0 884.3,588.0 884.9,588.0 885.5,588.0 886.1,588.0 886.7,588.0 887.3,588.0 887.9,588.0 888.5,588.0 889.1,588.0 889.7,588.0 890.3,588.0 890.9,588.0 891.5,588.0 892.1,588.0 892.8,588.0 893.4,588.0 894.0,588.0 894.6,588.0 895.2,588.0 895.8,588.0 896.4,588.0 897.0,588.0 897.6,588.0 898.2,588.0 898.8,588.0 899.4,588.0 900.0,588.0 900.6,588.0 901.2,588.0 901.8,588.0 902.4,588.0 903.0,588.0 903.6,588.0 904.2,588.0 904.8,588.0 905.4,588.0 906.0,588.0 906.6,588.0 907.2,588.0 907.9,588.0 908.5,588.0 909.1,588.0 909.7,588.0 910.3,588.0 910.9,588.0 911.5,588.0 912.1,588.0 912.7,588.0 913.3,588.0 913.9,588.0 914.5,588.0 915.1,588.0 915.7,588.0 916.3,588.0 916.9,588.0 917.5,588.0 918.1,588.0 918.7,588.0 919.3,588.0 919.9,588.0 920.5,588.0 921.1,588.0 921.7,588.0 922.3,588.0 922.9,588.0 923.6,588.0 924.2,588.0 924.8,588.0 925.4,588.0 926.0,588.0 926.6,588.0 927.2,588.0 927.8,588.0 928.4,588.0 929.0,588.0 929.6,588.0 930.2,588.0 930.8,588.0 931.4,588.0 932.0,588.0 932.6,588.0 933.2,588.0 933.8,588.0 934.4,588.0 935.0,588.0 935.6,588.0 936.2,588.0 936.8,588.0 937.4,588.0 938.0,588.0 938.7,588.0 939.3,588.0 939.9,588.0 940.5,588.0 941.1,588.0 941.7,588.0 942.3,588.0 942.9,588.0 943.5,588.0 944.1,588.0 944.7,588.0 945.3,588.0 945.9,588.0 946.5,588.0 947.1,588.0 947.7,588.0 948.3,588.0 948.9,588.0 949.5,588.0 950.1,588.0 950.7,588.0 951.3,588.0 951.9,588.0 952.5,588.0 953.1,588.0 953.7,588.0 954.4,588.0 955.0,588.0 955.6,588.0 956.2,588.0 956.8,588.0 957.4,588.0 958.0,588.0 958.6,588.0 959.2,588.0 959.8,588.0 960.4,588.0 961.0,588.0 961.6,588.0 962.2,588.0 962.8,588.0 963.4,588.0 964.0,588.0 964.6,588.0 965.2,588.0 965.8,588.0 966.4,588.0 967.0,588.0 967.6,588.0 968.2,588.0 968.8,588.0 969.5,588.0 970.1,588.0 970.7,588.0 971.3,588.0 971.9,588.0 972.5,588.0 973.1,588.0 973.7,588.0 974.3,588.0 974.9,588.0 975.5,588.0 976.1,588.0 976.7,588.0 977.3,588.0 977.9,588.0 978.5,588.0 979.1,588.0 979.7,588.0 980.3,588.0 980.9,588.0 981.5,588.0 982.1,588.0 982.7,588.0 983.3,588.0 983.9,588.0 984.6,588.0 985.2,588.0 985.8,588.0 986.4,588.0 987.0,588.0 987.6,588.0 988.2,588.0 988.8,588.0 989.4,588.0 990.0,588.0 990.6,588.0 991.2,588.0 991.8,588.0 992.4,588.0 993.0,588.0 993.6,588.0 994.2,587.9 994.8,587.9 995.4,587.9 996.0,587.9 996.6,587.9 997.2,587.9 997.8,587.9 998.4,587.8 999.0,587.8 999.6,587.8 1000.3,587.8 1000.9,587.8 1001.5,587.7 1002.1,587.7 1002.7,587.7 1003.3,587.7 1003.9,587.7 1004.5,587.6 1005.1,587.6 1005.7,587.6 1006.3,587.6 1006.9,587.5 1007.5,587.5 1008.1,587.5 1008.7,587.5 1009.3,587.5 1009.9,587.4 1010.5,587.4 1011.1,587.4 1011.7,587.4 1012.3,587.3 1012.9,587.3 1013.5,587.3 1014.1,587.3 1014.7,587.3 1015.4,587.2 1016.0,587.2 1016.6,587.2 1017.2,587.2 1017.8,587.2 1018.4,587.2 1019.0,587.2 1019.6,587.1 1020.2,587.1 1020.8,587.1 1021.4,587.1 1022.0,587.1 1022.6,587.1 1023.2,587.1 1023.8,587.1 1024.4,587.1 1025.0,587.1 1025.6,587.1 1026.2,587.2 1026.8,587.3 1027.4,587.4 1028.0,587.5 1028.6,587.7 1029.2,587.9 1029.8,588.1 1030.4,588.3 1031.1,588.5 1031.7,588.8 1032.3,589.0 1032.9,589.3 1033.5,589.5 1034.1,589.8 1034.7,590.0 1035.3,590.2 1035.9,590.4 1036.5,590.6 1037.1,590.7 1037.7,590.8 1038.3,590.9 1038.9,591.0 1039.5,591.0 1040.1,591.0 1040.7,591.0 1041.3,590.9 1041.9,590.7 1042.5,590.4 1043.1,590.1 1043.7,589.7 1044.3,589.3 1044.9,588.8 1045.5,588.2 1046.2,587.6 1046.8,587.0 1047.4,586.3 1048.0,585.6 1048.6,584.8 1049.2,584.0 1049.8,583.2 1050.4,582.4 1051.0,581.6 1051.6,580.7 1052.2,579.9 1052.8,579.1 1053.4,578.3 1054.0,577.5 1054.6,576.8 1055.2,576.0 1055.8,575.2 1056.4,574.6 1057.0,574.0 1057.6,573.5 1058.2,573.0 1058.8,572.4 1059.4,571.9 1060.0,571.6 1060.6,571.4 1061.3,571.3 1061.9,571.2 1062.5,571.0 1063.1,570.8 1063.7,570.9 1064.3,571.3 1064.9,572.1 1065.5,572.8 1066.1,573.5 1066.7,574.3 1067.3,575.3 1067.9,576.8 1068.5,578.6 1069.1,580.4 1069.7,582.0 1070.3,583.7 1070.9,585.6 1071.5,587.8 1072.1,590.1 1072.7,592.4 1073.3,594.8 1073.9,597.2 1074.5,599.4 1075.1,601.9 1075.7,604.7 1076.3,607.9 1077.0,610.6 1077.6,612.4 1078.2,613.8 1078.8,615.8 1079.4,619.2 1080.0,623.4 1080.6,626.5 1081.2,627.3 1081.8,626.6 1082.4,627.1 1083.0,630.5 1083.6,635.8 1084.2,639.6 1084.8,639.4 1085.4,636.1 1086.0,634.0 1086.6,636.4 1087.2,642.3 1087.8,647.0 1088.4,646.2 1089.0,640.9 1089.6,636.1 1090.2,636.2 1090.8,640.6 1091.4,643.9 1092.1,641.8 1092.7,634.6 1093.3,627.2 1093.9,623.5 1094.5,622.8 1095.1,621.2 1095.7,616.2 1096.3,609.5 1096.9,603.5 1097.5,596.2 1098.1,590.6 1098.7,588.7 1099.3,586.6 1099.9,578.1 1100.5,562.2 1101.1,547.2 1101.7,543.8 1102.3,552.4 1102.9,559.9 1103.5,550.8 1104.1,523.9 1104.7,497.4 1105.3,493.0 1105.9,513.6 1106.5,536.6 1107.1,533.9 1107.8,500.5 1108.4,462.1 1109.0,452.6 1109.6,480.4 1110.2,518.0 1110.8,527.2 1111.4,496.5 1112.0,453.4 1112.6,438.0 1113.2,464.7 1113.8,508.4 1114.4,529.9 1115.0,514.7 1115.6,485.3 1116.2,476.2 1116.8,499.5 1117.4,536.0 1118.0,558.9 1118.6,561.9 1119.2,561.1 1119.8,571.9 1120.4,588.7 1121.0,604.2 1121.6,630.3 1122.2,649.7 1122.9,646.0 1123.5,629.0 1124.1,631.9 1124.7,675.1 1125.3,736.8 1125.9,765.9 1126.5,733.8 1127.1,671.8 1127.7,648.0 1128.3,700.5 1128.9,792.3 1129.5,840.3 1130.1,795.4 1130.7,695.9 1131.3,636.1 1131.9,675.0 1132.5,776.9 1133.1,842.9 1133.7,806.9 1134.3,699.0 1134.9,616.6 1135.5,629.2 1136.1,713.2 1136.7,779.3 1137.3,760.9 1138.0,674.8 1138.6,597.8 1139.2,587.7 1139.8,632.0 1140.4,670.5 1141.0,660.5 1141.6,613.6 1142.2,572.4 1142.8,560.6 1143.4,563.2 1144.0,554.3 1144.6,551.5 1145.2,539.2 1145.8,505.5 1146.4,471.6 1147.0,471.0 1147.6,506.2 1148.2,535.7 1148.8,513.5 1149.4,442.0 1150.0,379.0 1150.6,383.4 1151.2,452.5 1151.8,517.8 1152.4,509.7 1153.0,428.1 1153.7,346.2 1154.3,340.5 1154.9,415.9 1155.5,500.9 1156.1,516.4 1156.7,452.2 1157.3,373.7 1157.9,356.7 1158.5,415.8 1159.1,495.0 1159.7,526.1 1160.3,492.7 1160.9,439.4 1161.5,423.0 1162.1,458.8 1162.7,513.2 1163.3,543.1 1163.9,536.9 1164.5,518.5 1165.1,516.2 1165.7,535.5 1166.3,560.0 1166.9,574.6 1167.5,581.3 1168.1,591.4 1168.8,596.2 1169.4,603.5 1170.0,622.7 1170.6,648.1 1171.2,663.0 1171.8,658.4 1172.4,645.6 1173.0,646.5 1173.6,671.0 1174.2,704.7 1174.8,722.4 1175.4,712.9 1176.0,690.7 1176.6,682.1 1177.2,699.4 1177.8,729.3 1178.4,746.6 1179.0,738.3 1179.6,715.3 1180.2,700.3 1180.8,706.0 1181.4,724.1 1182.0,735.6 1182.6,729.2 1183.2,710.6 1183.9,694.9 1184.5,691.4 1185.1,696.4 1185.7,699.1 1186.3,692.5 1186.9,679.1 1187.5,666.1 1188.1,658.2 1188.7,653.8 1189.3,648.6 1189.9,640.4 1190.5,630.7 1191.1,621.7 1191.7,613.2 1192.3,604.9 1192.9,597.9 1193.5,591.3 1194.1,583.3 1194.7,574.0 1195.3,565.5 1195.9,559.8 1196.5,556.6 1197.1,553.5 1197.7,548.5 1198.3,541.8 1198.9,536.2 1199.6,533.6 1200.2,534.0 1200.8,535.0 1201.4,534.6 1202.0,532.7 1202.6,531.1 1203.2,531.3 1203.8,533.6 1204.4,536.2 1205.0,537.9 1205.6,538.4 1206.2,538.8 1206.8,540.3 1207.4,543.0 1208.0,546.1 1208.6,548.9 1209.2,551.0 1209.8,553.1 1210.4,555.7 1211.0,558.7 1211.6,561.9 1212.2,565.0 1212.8,567.9 1213.4,570.7 1214.0,573.7 1214.7,576.6 1215.3,579.5 1215.9,582.3 1216.5,585.0 1217.1,587.6 1217.7,590.0 1218.3,592.2 1218.9,594.4 1219.5,596.5 1220.1,598.3 1220.7,599.8 1221.3,601.0 1221.9,602.1 1222.5,603.1 1223.1,603.8 1223.7,604.3 1224.3,604.4 1224.9,604.3 1225.5,604.2 1226.1,604.0 1226.7,603.9 1227.3,603.6 1227.9,603.3 1228.5,602.8 1229.1,602.4 1229.7,601.9 1230.4,601.3 1231.0,600.7 1231.6,600.1 1232.2,599.4 1232.8,598.6 1233.4,597.9 1234.0,597.1 1234.6,596.3 1235.2,595.5 1235.8,594.6 1236.4,593.8 1237.0,592.9 1237.6,592.1 1238.2,591.3 1238.8,590.5 1239.4,589.7 1240.0,588.9 1240.6,588.1 1241.2,587.4 1241.8,586.8 1242.4,586.1 1243.0,585.5 1243.6,585.0 1244.2,584.5 1244.8,584.1 1245.5,583.7 1246.1,583.4 1246.7,583.2 1247.3,583.0 1247.9,582.8 1248.5,582.8 1249.1,582.8 1249.7,582.8 1250.3,582.9 1250.9,582.9 1251.5,583.0 1252.1,583.1 1252.7,583.2 1253.3,583.3 1253.9,583.5 1254.5,583.6 1255.1,583.8 1255.7,584.0 1256.3,584.2 1256.9,584.4 1257.5,584.6 1258.1,584.9 1258.7,585.1 1259.3,585.3 1259.9,585.6 1260.6,585.8 1261.2,586.0 1261.8,586.3 1262.4,586.5 1263.0,586.7 1263.6,587.0 1264.2,587.2 1264.8,587.4 1265.4,587.6 1266.0,587.8 1266.6,587.9 1267.2,588.1 1267.8,588.2 1268.4,588.3 1269.0,588.5 1269.6,588.5 1270.2,588.6 1270.8,588.7 1271.4,588.7 1272.0,588.7 1272.6,588.7 1273.2,588.7 1273.8,588.7 1274.4,588.7 1275.0,588.7 1275.6,588.7 1276.3,588.7 1276.9,588.7 1277.5,588.7 1278.1,588.7 1278.7,588.6 1279.3,588.6 1279.9,588.6 1280.5,588.6 1281.1,588.6 1281.7,588.6 1282.3,588.5 1282.9,588.5 1283.5,588.5 1284.1,588.5 1284.7,588.5 1285.3,588.4 1285.9,588.4 1286.5,588.4 1287.1,588.4 1287.7,588.3 1288.3,588.3 1288.9,588.3 1289.5,588.3 1290.1,588.3 1290.7,588.2 1291.4,588.2 1292.0,588.2 1292.6,588.2 1293.2,588.2 1293.8,588.1 1294.4,588.1 1295.0,588.1 1295.6,588.1 1296.2,588.1 1296.8,588.1 1297.4,588.0 1298.0,588.0 1298.6,588.0 1299.2,588.0 1299.8,588.0 1300.4,588.0 1301.0,588.0 1301.6,588.0 1302.2,588.0 1302.8,588.0 1303.4,588.0 1304.0,588.0 1304.6,588.0 1305.2,588.0 1305.8,588.0 1306.4,588.0 1307.1,588.0 1307.7,588.0 1308.3,588.0 1308.9,588.0 1309.5,588.0 1310.1,588.0 1310.7,588.0 1311.3,588.0 1311.9,588.0 1312.5,588.0 1313.1,588.0 1313.7,588.0 1314.3,588.0 1314.9,588.0 1315.5,588.0 1316.1,588.0 1316.7,588.0 1317.3,588.0 1317.9,588.0 1318.5,588.0 1319.1,588.0 1319.7,588.0 1320.3,588.0 1320.9,588.0 1321.5,588.0 1322.2,588.0 1322.8,588.0 1323.4,588.0 1324.0,588.0 1324.6,588.0 1325.2,588.0 1325.8,588.0 1326.4,588.0 1327.0,588.0 1327.6,588.0 1328.2,588.0 1328.8,588.0 1329.4,588.0 1330.0,588.0 1330.6,588.0 1331.2,588.0 1331.8,588.0 1332.4,588.0 1333.0,588.0 1333.6,588.0 1334.2,588.0 1334.8,588.0 1335.4,588.0 1336.0,588.0 1336.6,588.0 1337.3,588.0 1337.9,588.0 1338.5,588.0 1339.1,588.0 1339.7,588.0 1340.3,588.0 1340.9,588.0 1341.5,588.0 1342.1,588.0 1342.7,588.0 1343.3,588.0 1343.9,588.0 1344.5,588.0 1345.1,588.0 1345.7,588.0 1346.3,588.0 1346.9,588.0 1347.5,588.0 1348.1,588.0 1348.7,588.0 1349.3,588.0 1349.9,588.0 1350.5,588.0 1351.1,588.0 1351.7,588.0 1352.3,588.0 1353.0,588.0 1353.6,588.0 1354.2,588.0 1354.8,588.0 1355.4,588.0 1356.0,588.0 1356.6,588.0 1357.2,588.0 1357.8,588.0 1358.4,588.0 1359.0,588.0 1359.6,588.0 1360.2,588.0 1360.8,588.0 1361.4,588.0 1362.0,588.0 1362.6,588.0 1363.2,588.0 1363.8,588.0 1364.4,588.0 1365.0,588.0 1365.6,588.0 1366.2,588.0 1366.8,588.0 1367.4,588.0 1368.1,588.0 1368.7,588.0 1369.3,588.0 1369.9,588.0 1370.5,588.0 1371.1,588.0 1371.7,588.0 1372.3,588.0 1372.9,588.0 1373.5,588.0 1374.1,588.0 1374.7,588.0 1375.3,588.0 1375.9,588.0 1376.5,588.0 1377.1,588.0 1377.7,588.0 1378.3,588.0 1378.9,588.0 1379.5,588.0 1380.1,588.0 1380.7,588.0 1381.3,588.0 1381.9,588.0 1382.5,588.0 1383.1,588.0 1383.8,588.0 1384.4,588.0 1385.0,588.0 1385.6,588.0 1386.2,588.0 1386.8,588.0 1387.4,588.0 1388.0,588.0 1388.6,588.0 1389.2,588.0 1389.8,588.0 1390.4,588.0 1391.0,588.0 1391.6,588.0 1392.2,588.0 1392.8,588.0 1393.4,588.0 1394.0,588.0 1394.6,588.0 1395.2,588.0 1395.8,588.0 1396.4,588.0 1397.0,588.0 1397.6,588.0 1398.2,588.0 1398.9,588.0 1399.5,588.0 1400.1,588.0 1400.7,588.0 1401.3,588.0 1401.9,588.0 1402.5,588.0 1403.1,588.0 1403.7,588.0 1404.3,588.0 1404.9,588.0 1405.5,588.0 1406.1,588.0 1406.7,588.0 1407.3,588.0 1407.9,588.0 1408.5,588.0 1409.1,588.0 1409.7,588.0 1410.3,588.0 1410.9,588.0 1411.5,588.0 1412.1,588.0 1412.7,588.0 1413.3,588.0 1414.0,588.0 1414.6,588.0 1415.2,588.0 1415.8,588.0 1416.4,588.0 1417.0,588.0 1417.6,588.0 1418.2,588.0 1418.8,588.0 1419.4,588.0 1420.0,588.0 1420.6,588.0 1421.2,588.0 1421.8,588.0 1422.4,588.0 1423.0,588.0 1423.6,588.0 1424.2,588.0 1424.8,588.0 1425.4,588.0 1426.0,588.0 1426.6,588.0 1427.2,588.0 1427.8,588.0 1428.4,588.0 1429.0,588.0 1429.7,588.0 1430.3,588.0 1430.9,588.0 1431.5,588.0 1432.1,588.0 1432.7,588.0 1433.3,588.0 1433.9,588.0 1434.5,588.0 1435.1,588.0 1435.7,588.0 1436.3,588.0 1436.9,588.0 1437.5,588.0 1438.1,588.0 1438.7,588.0 1439.3,588.0 1439.9,588.0 1440.5,588.0 1441.1,588.0 1441.7,588.0 1442.3,588.0 1442.9,588.0 1443.5,588.0 1444.1,588.0 1444.8,588.0 1445.4,588.0 1446.0,588.0 1446.6,588.0 1447.2,588.0"/>
<polyline fill="none" stroke="#b4ad6a" stroke-opacity="0.7" stroke-width="0.9" points="843.8,588.0 844.4,588.0 845.0,588.0 845.6,588.0 846.2,588.0 846.9,588.0 847.5,588.0 848.1,588.0 848.7,588.0 849.3,588.0 849.9,588.0 850.5,588.0 851.1,588.0 851.7,588.0 852.3,588.0 852.9,588.0 853.5,588.0 854.1,588.0 854.7,588.0 855.3,588.0 855.9,588.0 856.5,588.0 857.1,588.0 857.7,588.0 858.3,588.0 858.9,588.0 859.5,588.0 860.1,588.0 860.7,588.0 861.3,588.0 862.0,588.0 862.6,588.0 863.2,588.0 863.8,588.0 864.4,588.0 865.0,588.0 865.6,588.0 866.2,588.0 866.8,588.0 867.4,588.0 868.0,588.0 868.6,588.0 869.2,588.0 869.8,588.0 870.4,588.0 871.0,588.0 871.6,588.0 872.2,588.0 872.8,588.0 873.4,588.0 874.0,588.0 874.6,588.0 875.2,588.0 875.8,588.0 876.4,588.0 877.0,588.0 877.7,588.0 878.3,588.0 878.9,588.0 879.5,588.0 880.1,588.0 880.7,588.0 881.3,588.0 881.9,588.0 882.5,588.0 883.1,588.0 883.7,588.0 884.3,588.0 884.9,588.0 885.5,588.0 886.1,588.0 886.7,588.0 887.3,588.0 887.9,588.0 888.5,588.0 889.1,588.0 889.7,588.0 890.3,588.0 890.9,588.0 891.5,588.0 892.1,588.0 892.8,588.0 893.4,588.0 894.0,588.0 894.6,588.0 895.2,588.0 895.8,588.0 896.4,588.0 897.0,588.0 897.6,588.0 898.2,588.0 898.8,588.0 899.4,588.0 900.0,588.0 900.6,588.0 901.2,588.0 901.8,588.0 902.4,588.0 903.0,588.0 903.6,588.0 904.2,588.0 904.8,588.0 905.4,588.0 906.0,588.0 906.6,588.0 907.2,588.0 907.9,588.0 908.5,588.0 909.1,588.0 909.7,588.0 910.3,588.0 910.9,588.0 911.5,588.0 912.1,588.0 912.7,588.0 913.3,588.0 913.9,588.0 914.5,588.0 915.1,588.0 915.7,588.0 916.3,588.0 916.9,588.0 917.5,588.0 918.1,588.0 918.7,588.0 919.3,588.0 919.9,588.0 920.5,588.0 921.1,588.0 921.7,588.0 922.3,588.0 922.9,588.0 923.6,588.0 924.2,588.0 924.8,588.0 925.4,588.0 926.0,588.0 926.6,588.0 927.2,588.0 927.8,588.0 928.4,588.0 929.0,588.0 929.6,588.0 930.2,588.0 930.8,588.0 931.4,588.0 932.0,588.0 932.6,588.0 933.2,588.0 933.8,588.0 934.4,588.0 935.0,588.0 935.6,588.0 936.2,588.0 936.8,588.0 937.4,588.0 938.0,588.0 938.7,588.0 939.3,588.0 939.9,588.0 940.5,588.0 941.1,588.0 941.7,588.0 942.3,588.0 942.9,588.0 943.5,588.0 944.1,588.0 944.7,588.0 945.3,588.0 945.9,588.0 946.5,588.0 947.1,588.0 947.7,588.0 948.3,588.0 948.9,588.0 949.5,588.0 950.1,588.0 950.7,588.0 951.3,588.0 951.9,588.0 952.5,588.0 953.1,588.0 953.7,588.0 954.4,588.0 955.0,588.0 955.6,588.0 956.2,588.0 956.8,588.0 957.4,588.0 958.0,588.0 958.6,588.0 959.2,588.0 959.8,588.0 960.4,588.0 961.0,588.0 961.6,588.0 962.2,588.0 962.8,588.0 963.4,588.0 964.0,588.0 964.6,588.0 965.2,588.0 965.8,588.0 966.4,588.0 967.0,588.0 967.6,588.0 968.2,588.0 968.8,588.0 969.5,588.0 970.1,588.0 970.7,588.0 971.3,588.0 971.9,588.0 972.5,588.0 973.1,588.0 973.7,588.0 974.3,588.0 974.9,588.0 975.5,588.0 976.1,588.0 976.7,588.0 977.3,588.0 977.9,588.0 978.5,588.0 979.1,588.0 979.7,588.0 980.3,588.0 980.9,588.0 981.5,588.0 982.1,588.0 982.7,588.0 983.3,588.0 983.9,588.0 984.6,588.0 985.2,588.0 985.8,588.0 986.4,588.0 987.0,588.0 987.6,588.0 988.2,588.0 988.8,588.0 989.4,588.0 990.0,588.0 990.6,588.0 991.2,588.0 991.8,588.0 992.4,588.0 993.0,588.0 993.6,588.0 994.2,587.9 994.8,587.9 995.4,587.9 996.0,587.9 996.6,587.9 997.2,587.9 997.8,587.9 998.4,587.8 999.0,587.8 999.6,587.8 1000.3,587.8 1000.9,587.8 1001.5,587.7 1002.1,587.7 1002.7,587.7 1003.3,587.7 1003.9,587.7 1004.5,587.6 1005.1,587.6 1005.7,587.6 1006.3,587.6 1006.9,587.5 1007.5,587.5 1008.1,587.5 1008.7,587.5 1009.3,587.5 1009.9,587.4 1010.5,587.4 1011.1,587.4 1011.7,587.4 1012.3,587.3 1012.9,587.3 1013.5,587.3 1014.1,587.3 1014.7,587.3 1015.4,587.2 1016.0,587.2 1016.6,587.2 1017.2,587.2 1017.8,587.2 1018.4,587.2 1019.0,587.2 1019.6,587.1 1020.2,587.1 1020.8,587.1 1021.4,587.1 1022.0,587.1 1022.6,587.1 1023.2,587.1 1023.8,587.1 1024.4,587.1 1025.0,587.1 1025.6,587.1 1026.2,587.2 1026.8,587.3 1027.4,587.4 1028.0,587.5 1028.6,587.7 1029.2,587.9 1029.8,588.1 1030.4,588.3 1031.1,588.5 1031.7,588.8 1032.3,589.0 1032.9,589.3 1033.5,589.5 1034.1,589.8 1034.7,590.0 1035.3,590.2 1035.9,590.4 1036.5,590.6 1037.1,590.7 1037.7,590.8 1038.3,590.9 1038.9,591.0 1039.5,591.0 1040.1,591.0 1040.7,591.0 1041.3,590.9 1041.9,590.7 1042.5,590.4 1043.1,590.1 1043.7,589.7 1044.3,589.3 1044.9,588.8 1045.5,588.2 1046.2,587.6 1046.8,587.0 1047.4,586.3 1048.0,585.6 1048.6,584.8 1049.2,584.0 1049.8,583.2 1050.4,582.4 1051.0,581.6 1051.6,580.7 1052.2,579.9 1052.8,579.1 1053.4,578.3 1054.0,577.5 1054.6,576.7 1055.2,576.0 1055.8,575.3 1056.4,574.7 1057.0,574.0 1057.6,573.4 1058.2,572.8 1058.8,572.4 1059.4,572.1 1060.0,571.8 1060.6,571.5 1061.3,571.2 1061.9,570.9 1062.5,570.8 1063.1,570.9 1063.7,571.2 1064.3,571.6 1064.9,571.9 1065.5,572.4 1066.1,573.2 1066.7,574.4 1067.3,575.8 1067.9,577.2 1068.5,578.6 1069.1,580.0 1069.7,581.7 1070.3,583.7 1070.9,585.8 1071.5,588.0 1072.1,590.2 1072.7,592.4 1073.3,594.7 1073.9,597.1 1074.5,599.7 1075.1,602.5 1075.7,605.1 1076.3,607.2 1077.0,609.2 1077.6,611.5 1078.2,614.8 1078.8,618.3 1079.4,621.0 1080.0,622.3 1080.6,622.8 1081.2,624.3 1081.8,627.7 1082.4,632.1 1083.0,635.1 1083.6,635.2 1084.2,633.4 1084.8,633.0 1085.4,635.9 1086.0,641.0 1086.6,644.5 1087.2,643.6 1087.8,639.6 1088.4,636.7 1089.0,638.2 1089.6,643.0 1090.2,646.3 1090.8,644.4 1091.4,638.3 1092.1,632.5 1092.7,630.3 1093.3,631.0 1093.9,630.5 1094.5,626.3 1095.1,619.5 1095.7,613.3 1096.3,608.8 1096.9,603.7 1097.5,599.3 1098.1,595.1 1098.7,587.7 1099.3,576.3 1099.9,565.9 1100.5,562.2 1101.1,565.3 1101.7,566.3 1102.3,555.8 1102.9,534.7 1103.5,516.2 1104.1,514.2 1104.7,528.1 1105.3,540.3 1105.9,532.2 1106.5,503.3 1107.1,475.0 1107.8,471.3 1108.4,494.4 1109.0,520.2 1109.6,520.4 1110.2,490.4 1110.8,455.5 1111.4,447.5 1112.0,473.2 1112.6,507.6 1113.2,518.6 1113.8,498.0 1114.4,469.0 1115.0,462.4 1115.6,486.9 1116.2,522.3 1116.8,542.1 1117.4,539.9 1118.0,532.2 1118.6,537.8 1119.2,557.4 1119.8,577.3 1120.4,590.9 1121.0,608.5 1121.6,615.7 1122.2,615.1 1122.9,625.4 1123.5,659.0 1124.1,701.4 1124.7,720.0 1125.3,698.9 1125.9,663.0 1126.5,659.2 1127.1,708.7 1127.7,778.3 1128.3,806.9 1128.9,765.6 1129.5,692.3 1130.1,659.8 1130.7,705.1 1131.3,789.5 1131.9,832.5 1132.5,789.4 1133.1,696.9 1133.7,638.9 1134.3,665.0 1134.9,743.7 1135.5,793.8 1136.1,763.9 1136.7,679.5 1137.3,614.2 1138.0,616.3 1138.6,666.5 1139.2,703.4 1139.8,686.7 1140.4,631.8 1141.0,585.4 1141.6,575.1 1142.2,587.1 1142.8,590.5 1143.4,574.3 1144.0,554.3 1144.6,537.2 1145.2,515.0 1145.8,509.0 1146.4,523.8 1147.0,533.9 1147.6,509.9 1148.2,456.0 1148.8,413.8 1149.4,422.4 1150.0,473.6 1150.6,513.2 1151.2,492.9 1151.8,421.2 1152.4,360.3 1153.0,366.4 1153.7,433.5 1154.3,496.9 1154.9,495.4 1155.5,430.8 1156.1,365.7 1156.7,362.1 1157.3,422.5 1157.9,490.7 1158.5,507.7 1159.1,467.2 1159.7,416.7 1160.3,408.1 1160.9,449.6 1161.5,503.7 1162.1,528.0 1162.7,514.5 1163.3,491.2 1163.9,488.8 1164.5,512.3 1165.1,542.5 1165.7,560.2 1166.3,564.5 1166.9,568.3 1167.5,579.7 1168.1,589.4 1168.8,603.1 1169.4,621.5 1170.0,634.2 1170.6,634.5 1171.2,630.3 1171.8,636.8 1172.4,660.1 1173.0,687.9 1173.6,701.2 1174.2,693.3 1174.8,678.1 1175.4,676.7 1176.0,696.8 1176.6,724.4 1177.2,738.0 1177.8,729.0 1178.4,709.8 1179.0,700.7 1179.6,710.7 1180.2,729.6 1180.8,739.6 1181.4,731.9 1182.0,714.3 1182.6,701.5 1183.2,701.5 1183.9,708.9 1184.5,712.1 1185.1,705.0 1185.7,691.1 1186.3,678.7 1186.9,672.3 1187.5,669.9 1188.1,666.0 1188.7,657.9 1189.3,647.4 1189.9,637.5 1190.5,629.4 1191.1,621.8 1191.7,613.7 1192.3,606.1 1192.9,597.9 1193.5,588.8 1194.1,580.2 1194.7,573.7 1195.3,568.9 1195.9,564.1 1196.5,557.6 1197.1,550.1 1197.7,543.7 1198.3,540.2 1198.9,539.1 1199.6,538.2 1200.2,536.0 1200.8,532.8 1201.4,530.6 1202.0,530.7 1202.6,532.5 1203.2,534.6 1203.8,535.5 1204.4,535.4 1205.0,535.5 1205.6,536.7 1206.2,539.2 1206.8,542.0 1207.4,544.3 1208.0,546.1 1208.6,547.8 1209.2,550.2 1209.8,553.1 1210.4,556.2 1211.0,559.2 1211.6,562.0 1212.2,564.7 1212.8,567.6 1213.4,570.7 1214.0,573.7 1214.7,576.7 1215.3,579.5 1215.9,582.3 1216.5,585.0 1217.1,587.5 1217.7,590.0 1218.3,592.4 1218.9,594.5 1219.5,596.4 1220.1,598.1 1220.7,599.7 1221.3,601.1 1221.9,602.3 1222.5,603.2 1223.1,603.8 1223.7,604.1 1224.3,604.3 1224.9,604.3 1225.5,604.3 1226.1,604.1 1226.7,603.9 1227.3,603.6 1227.9,603.2 1228.5,602.8 1229.1,602.4 1229.7,601.9 1230.4,601.3 1231.0,600.7 1231.6,600.0 1232.2,599.3 1232.8,598.6 1233.4,597.9 1234.0,597.1 1234.6,596.3 1235.2,595.5 1235.8,594.6 1236.4,593.8 1237.0,592.9 1237.6,592.1 1238.2,591.3 1238.8,590.5 1239.4,589.7 1240.0,588.9 1240.6,588.1 1241.2,587.4 1241.8,586.8 1242.4,586.1 1243.0,585.5 1243.6,585.0 1244.2,584.5 1244.8,584.1 1245.5,583.7 1246.1,583.4 1246.7,583.2 1247.3,583.0 1247.9,582.8 1248.5,582.8 1249.1,582.8 1249.7,582.8 1250.3,582.9 1250.9,582.9 1251.5,583.0 1252.1,583.1 1252.7,583.2 1253.3,583.3 1253.9,583.5 1254.5,583.6 1255.1,583.8 1255.7,584.0 1256.3,584.2 1256.9,584.4 1257.5,584.6 1258.1,584.9 1258.7,585.1 1259.3,585.3 1259.9,585.6 1260.6,585.8 1261.2,586.0 1261.8,586.3 1262.4,586.5 1263.0,586.7 1263.6,587.0 1264.2,587.2 1264.8,587.4 1265.4,587.6 1266.0,587.8 1266.6,587.9 1267.2,588.1 1267.8,588.2 1268.4,588.3 1269.0,588.5 1269.6,588.5 1270.2,588.6 1270.8,588.7 1271.4,588.7 1272.0,588.7 1272.6,588.7 1273.2,588.7 1273.8,588.7 1274.4,588.7 1275.0,588.7 1275.6,588.7 1276.3,588.7 1276.9,588.7 1277.5,588.7 1278.1,588.7 1278.7,588.6 1279.3,588.6 1279.9,588.6 1280.5,588.6 1281.1,588.6 1281.7,588.6 1282.3,588.5 1282.9,588.5 1283.5,588.5 1284.1,588.5 1284.7,588.5 1285.3,588.4 1285.9,588.4 1286.5,588.4 1287.1,588.4 1287.7,588.3 1288.3,588.3 1288.9,588.3 1289.5,588.3 1290.1,588.3 1290.7,588.2 1291.4,588.2 1292.0,588.2 1292.6,588.2 1293.2,588.2 1293.8,588.1 1294.4,588.1 1295.0,588.1 1295.6,588.1 1296.2,588.1 1296.8,588.1 1297.4,588.0 1298.0,588.0 1298.6,588.0 1299.2,588.0 1299.8,588.0 1300.4,588.0 1301.0,588.0 1301.6,588.0 1302.2,588.0 1302.8,588.0 1303.4,588.0 1304.0,588.0 1304.6,588.0 1305.2,588.0 1305.8,588.0 1306.4,588.0 1307.1,588.0 1307.7,588.0 1308.3,588.0 1308.9,588.0 1309.5,588.0 1310.1,588.0 1310.7,588.0 1311.3,588.0 1311.9,588.0 1312.5,588.0 1313.1,588.0 1313.7,588.0 1314.3,588.0 1314.9,588.0 1315.5,588.0 1316.1,588.0 1316.7,588.0 1317.3,588.0 1317.9,588.0 1318.5,588.0 1319.1,588.0 1319.7,588.0 1320.3,588.0 1320.9,588.0 1321.5,588.0 1322.2,588.0 1322.8,588.0 1323.4,588.0 1324.0,588.0 1324.6,588.0 1325.2,588.0 1325.8,588.0 1326.4,588.0 1327.0,588.0 1327.6,588.0 1328.2,588.0 1328.8,588.0 1329.4,588.0 1330.0,588.0 1330.6,588.0 1331.2,588.0 1331.8,588.0 1332.4,588.0 1333.0,588.0 1333.6,588.0 1334.2,588.0 1334.8,588.0 1335.4,588.0 1336.0,588.0 1336.6,588.0 1337.3,588.0 1337.9,588.0 1338.5,588.0 1339.1,588.0 1339.7,588.0 1340.3,588.0 1340.9,588.0 1341.5,588.0 1342.1,588.0 1342.7,588.0 1343.3,588.0 1343.9,588.0 1344.5,588.0 1345.1,588.0 1345.7,588.0 1346.3,588.0 1346.9,588.0 1347.5,588.0 1348.1,588.0 1348.7,588.0 1349.3,588.0 1349.9,588.0 1350.5,588.0 1351.1,588.0 1351.7,588.0 1352.3,588.0 1353.0,588.0 1353.6,588.0 1354.2,588.0 1354.8,588.0 1355.4,588.0 1356.0,588.0 1356.6,588.0 1357.2,588.0 1357.8,588.0 1358.4,588.0 1359.0,588.0 1359.6,588.0 1360.2,588.0 1360.8,588.0 1361.4,588.0 1362.0,588.0 1362.6,588.0 1363.2,588.0 1363.8,588.0 1364.4,588.0 1365.0,588.0 1365.6,588.0 1366.2,588.0 1366.8,588.0 1367.4,588.0 1368.1,588.0 1368.7,588.0 1369.3,588.0 1369.9,588.0 1370.5,588.0 1371.1,588.0 1371.7,588.0 1372.3,588.0 1372.9,588.0 1373.5,588.0 1374.1,588.0 1374.7,588.0 1375.3,588.0 1375.9,588.0 1376.5,588.0 1377.1,588.0 1377.7,588.0 1378.3,588.0 1378.9,588.0 1379.5,588.0 1380.1,588.0 1380.7,588.0 1381.3,588.0 1381.9,588.0 1382.5,588.0 1383.1,588.0 1383.8,588.0 1384.4,588.0 1385.0,588.0 1385.6,588.0 1386.2,588.0 1386.8,588.0 1387.4,588.0 1388.0,588.0 1388.6,588.0 1389.2,588.0 1389.8,588.0 1390.4,588.0 1391.0,588.0 1391.6,588.0 1392.2,588.0 1392.8,588.0 1393.4,588.0 1394.0,588.0 1394.6,588.0 1395.2,588.0 1395.8,588.0 1396.4,588.0 1397.0,588.0 1397.6,588.0 1398.2,588.0 1398.9,588.0 1399.5,588.0 1400.1,588.0 1400.7,588.0 1401.3,588.0 1401.9,588.0 1402.5,588.0 1403.1,588.0 1403.7,588.0 1404.3,588.0 1404.9,588.0 1405.5,588.0 1406.1,588.0 1406.7,588.0 1407.3,588.0 1407.9,588.0 1408.5,588.0 1409.1,588.0 1409.7,588.0 1410.3,588.0 1410.9,588.0 1411.5,588.0 1412.1,588.0 1412.7,588.0 1413.3,588.0 1414.0,588.0 1414.6,588.0 1415.2,588.0 1415.8,588.0 1416.4,588.0 1417.0,588.0 1417.6,588.0 1418.2,588.0 1418.8,588.0 1419.4,588.0 1420.0,588.0 1420.6,588.0 1421.2,588.0 1421.8,588.0 1422.4,588.0 1423.0,588.0 1423.6,588.0 1424.2,588.0 1424.8,588.0 1425.4,588.0 1426.0,588.0 1426.6,588.0 1427.2,588.0 1427.8,588.0 1428.4,588.0 1429.0,588.0 1429.7,588.0 1430.3,588.0 1430.9,588.0 1431.5,588.0 1432.1,588.0 1432.7,588.0 1433.3,588.0 1433.9,588.0 1434.5,588.0 1435.1,588.0 1435.7,588.0 1436.3,588.0 1436.9,588.0 1437.5,588.0 1438.1,588.0 1438.7,588.0 1439.3,588.0 1439.9,588.0 1440.5,588.0 1441.1,588.0 1441.7,588.0 1442.3,588.0 1442.9,588.0 1443.5,588.0 1444.1,588.0 1444.8,588.0 1445.4,588.0 1446.0,588.0 1446.6,588.0 1447.2,588.0"/>
<polyline fill="none" stroke="#98b070" stroke-opacity="0.6" stroke-width="0.9" points="843.8,588.0 844.4,588.0 845.0,588.0 845.6,588.0 846.2,588.0 846.9,588.0 847.5,588.0 848.1,588.0 848.7,588.0 849.3,588.0 849.9,588.0 850.5,588.0 851.1,588.0 851.7,588.0 852.3,588.0 852.9,588.0 853.5,588.0 854.1,588.0 854.7,588.0 855.3,588.0 855.9,588.0 856.5,588.0 857.1,588.0 857.7,588.0 858.3,588.0 858.9,588.0 859.5,588.0 860.1,588.0 860.7,588.0 861.3,588.0 862.0,588.0 862.6,588.0 863.2,588.0 863.8,588.0 864.4,588.0 865.0,588.0 865.6,588.0 866.2,588.0 866.8,588.0 867.4,588.0 868.0,588.0 868.6,588.0 869.2,588.0 869.8,588.0 870.4,588.0 871.0,588.0 871.6,588.0 872.2,588.0 872.8,588.0 873.4,588.0 874.0,588.0 874.6,588.0 875.2,588.0 875.8,588.0 876.4,588.0 877.0,588.0 877.7,588.0 878.3,588.0 878.9,588.0 879.5,588.0 880.1,588.0 880.7,588.0 881.3,588.0 881.9,588.0 882.5,588.0 883.1,588.0 883.7,588.0 884.3,588.0 884.9,588.0 885.5,588.0 886.1,588.0 886.7,588.0 887.3,588.0 887.9,588.0 888.5,588.0 889.1,588.0 889.7,588.0 890.3,588.0 890.9,588.0 891.5,588.0 892.1,588.0 892.8,588.0 893.4,588.0 894.0,588.0 894.6,588.0 895.2,588.0 895.8,588.0 896.4,588.0 897.0,588.0 897.6,588.0 898.2,588.0 898.8,588.0 899.4,588.0 900.0,588.0 900.6,588.0 901.2,588.0 901.8,588.0 902.4,588.0 903.0,588.0 903.6,588.0 904.2,588.0 904.8,588.0 905.4,588.0 906.0,588.0 906.6,588.0 907.2,588.0 907.9,588.0 908.5,588.0 909.1,588.0 909.7,588.0 910.3,588.0 910.9,588.0 911.5,588.0 912.1,588.0 912.7,588.0 913.3,588.0 913.9,588.0 914.5,588.0 915.1,588.0 915.7,588.0 916.3,588.0 916.9,588.0 917.5,588.0 918.1,588.0 918.7,588.0 919.3,588.0 919.9,588.0 920.5,588.0 921.1,588.0 921.7,588.0 922.3,588.0 922.9,588.0 923.6,588.0 924.2,588.0 924.8,588.0 925.4,588.0 926.0,588.0 926.6,588.0 927.2,588.0 927.8,588.0 928.4,588.0 929.0,588.0 929.6,588.0 930.2,588.0 930.8,588.0 931.4,588.0 932.0,588.0 932.6,588.0 933.2,588.0 933.8,588.0 934.4,588.0 935.0,588.0 935.6,588.0 936.2,588.0 936.8,588.0 937.4,588.0 938.0,588.0 938.7,588.0 939.3,588.0 939.9,588.0 940.5,588.0 941.1,588.0 941.7,588.0 942.3,588.0 942.9,588.0 943.5,588.0 944.1,588.0 944.7,588.0 945.3,588.0 945.9,588.0 946.5,588.0 947.1,588.0 947.7,588.0 948.3,588.0 948.9,588.0 949.5,588.0 950.1,588.0 950.7,588.0 951.3,588.0 951.9,588.0 952.5,588.0 953.1,588.0 953.7,588.0 954.4,588.0 955.0,588.0 955.6,588.0 956.2,588.0 956.8,588.0 957.4,588.0 958.0,588.0 958.6,588.0 959.2,588.0 959.8,588.0 960.4,588.0 961.0,588.0 961.6,588.0 962.2,588.0 962.8,588.0 963.4,588.0 964.0,588.0 964.6,588.0 965.2,588.0 965.8,588.0 966.4,588.0 967.0,588.0 967.6,588.0 968.2,588.0 968.8,588.0 969.5,588.0 970.1,588.0 970.7,588.0 971.3,588.0 971.9,588.0 972.5,588.0 973.1,588.0 973.7,588.0 974.3,588.0 974.9,588.0 975.5,588.0 976.1,588.0 976.7,588.0 977.3,588.0 977.9,588.0 978.5,588.0 979.1,588.0 979.7,588.0 980.3,588.0 980.9,588.0 981.5,588.0 982.1,588.0 982.7,588.0 983.3,588.0 983.9,588.0 984.6,588.0 985.2,588.0 985.8,588.0 986.4,588.0 987.0,588.0 987.6,588.0 988.2,588.0 988.8,588.0 989.4,588.0 990.0,588.0 990.6,588.0 991.2,588.0 991.8,588.0 992.4,588.0 993.0,588.0 993.6,588.0 994.2,587.9 994.8,587.9 995.4,587.9 996.0,587.9 996.6,587.9 997.2,587.9 997.8,587.9 998.4,587.8 999.0,587.8 999.6,587.8 1000.3,587.8 1000.9,587.8 1001.5,587.7 1002.1,587.7 1002.7,587.7 1003.3,587.7 1003.9,587.7 1004.5,587.6 1005.1,587.6 1005.7,587.6 1006.3,587.6 1006.9,587.5 1007.5,587.5 1008.1,587.5 1008.7,587.5 1009.3,587.5 1009.9,587.4 1010.5,587.4 1011.1,587.4 1011.7,587.4 1012.3,587.3 1012.9,587.3 1013.5,587.3 1014.1,587.3 1014.7,587.3 1015.4,587.2 1016.0,587.2 1016.6,587.2 1017.2,587.2 1017.8,587.2 1018.4,587.2 1019.0,587.2 1019.6,587.1 1020.2,587.1 1020.8,587.1 1021.4,587.1 1022.0,587.1 1022.6,587.1 1023.2,587.1 1023.8,587.1 1024.4,587.1 1025.0,587.1 1025.6,587.1 1026.2,587.2 1026.8,587.3 1027.4,587.4 1028.0,587.5 1028.6,587.7 1029.2,587.9 1029.8,588.1 1030.4,588.3 1031.1,588.5 1031.7,588.8 1032.3,589.0 1032.9,589.3 1033.5,589.5 1034.1,589.8 1034.7,590.0 1035.3,590.2 1035.9,590.4 1036.5,590.6 1037.1,590.7 1037.7,590.8 1038.3,590.9 1038.9,591.0 1039.5,591.0 1040.1,591.1 1040.7,591.0 1041.3,590.9 1041.9,590.7 1042.5,590.4 1043.1,590.1 1043.7,589.7 1044.3,589.3 1044.9,588.8 1045.5,588.2 1046.2,587.6 1046.8,587.0 1047.4,586.3 1048.0,585.6 1048.6,584.8 1049.2,584.0 1049.8,583.2 1050.4,582.4 1051.0,581.6 1051.6,580.8 1052.2,579.9 1052.8,579.1 1053.4,578.3 1054.0,577.5 1054.6,576.7 1055.2,576.0 1055.8,575.3 1056.4,574.6 1057.0,574.0 1057.6,573.4 1058.2,572.9 1058.8,572.5 1059.4,572.1 1060.0,571.7 1060.6,571.3 1061.3,571.1 1061.9,571.0 1062.5,571.0 1063.1,571.1 1063.7,571.1 1064.3,571.3 1064.9,571.7 1065.5,572.5 1066.1,573.5 1066.7,574.6 1067.3,575.7 1067.9,576.9 1068.5,578.3 1069.1,580.0 1069.7,581.9 1070.3,583.9 1070.9,585.9 1071.5,587.9 1072.1,590.1 1072.7,592.4 1073.3,594.8 1073.9,597.3 1074.5,599.8 1075.1,602.2 1075.7,604.5 1076.3,606.8 1077.0,609.7 1077.6,612.8 1078.2,615.6 1078.8,617.6 1079.4,619.0 1080.0,620.7 1080.6,623.5 1081.2,627.2 1081.8,630.3 1082.4,631.6 1083.0,631.3 1083.6,631.4 1084.2,633.5 1084.8,637.5 1085.4,641.0 1086.0,641.6 1086.6,639.5 1087.2,637.4 1087.8,638.1 1088.4,641.7 1089.0,645.2 1089.6,645.4 1090.2,641.8 1090.8,637.3 1091.4,635.2 1092.1,635.9 1092.7,636.5 1093.3,634.1 1093.9,628.5 1094.5,622.2 1095.1,617.5 1095.7,613.9 1096.3,609.5 1096.9,604.3 1097.5,598.9 1098.1,591.3 1098.7,582.8 1099.3,576.7 1099.9,574.8 1100.5,573.3 1101.1,566.4 1101.7,552.1 1102.3,536.8 1102.9,530.2 1103.5,534.9 1104.1,542.0 1104.7,537.9 1105.3,518.6 1105.9,495.6 1106.5,486.5 1107.1,497.4 1107.8,515.4 1108.4,519.0 1109.0,499.7 1109.6,471.3 1110.2,458.3 1110.8,471.7 1111.4,497.8 1112.0,510.7 1112.6,497.5 1113.2,471.5 1113.8,458.7 1114.4,472.5 1115.0,501.8 1115.6,523.0 1116.2,524.1 1116.8,514.4 1117.4,513.0 1118.0,528.2 1118.6,551.3 1119.2,569.0 1119.8,578.9 1120.4,589.9 1121.0,599.6 1121.6,608.9 1122.2,628.8 1122.9,658.1 1123.5,680.0 1124.1,679.2 1124.7,662.8 1125.3,658.7 1125.9,687.9 1126.5,738.5 1127.1,771.2 1127.7,757.2 1128.3,710.8 1128.9,680.7 1129.5,703.7 1130.1,765.1 1130.7,809.2 1131.3,792.3 1131.9,727.0 1132.5,672.5 1133.1,678.4 1133.7,735.8 1134.3,785.7 1134.9,776.4 1135.5,712.8 1136.1,649.7 1136.7,637.4 1137.3,674.7 1138.0,714.0 1138.6,710.8 1139.2,664.6 1139.8,613.9 1140.4,594.1 1141.0,604.8 1141.6,617.5 1142.2,609.5 1142.8,585.2 1143.4,563.9 1144.0,554.3 1144.6,538.6 1145.2,534.4 1145.8,535.8 1146.4,523.6 1147.0,490.4 1147.6,455.5 1148.2,447.8 1148.8,473.1 1149.4,501.7 1150.0,495.1 1150.6,447.2 1151.2,394.7 1151.8,384.1 1152.4,424.3 1153.0,475.2 1153.7,485.2 1154.3,441.9 1154.9,385.1 1155.5,368.3 1156.1,407.0 1156.7,465.0 1157.3,490.1 1157.9,464.5 1158.5,419.1 1159.1,401.1 1159.7,429.0 1160.3,477.9 1160.9,507.8 1161.5,501.9 1162.1,478.7 1162.7,469.4 1163.3,487.0 1163.9,518.3 1164.5,541.3 1165.1,547.8 1165.7,547.2 1166.3,552.6 1166.9,566.1 1167.5,580.4 1168.1,593.2 1168.8,606.9 1169.4,614.9 1170.0,617.5 1170.6,623.4 1171.2,639.8 1171.8,662.4 1172.4,678.3 1173.0,679.1 1173.6,671.0 1174.2,669.5 1174.8,683.9 1175.4,707.5 1176.0,723.9 1176.6,722.6 1177.2,709.6 1177.8,701.1 1178.4,707.6 1179.0,724.5 1179.6,736.9 1180.2,734.7 1180.8,721.3 1181.4,709.2 1182.0,707.5 1182.6,714.3 1183.2,719.6 1183.9,715.9 1184.5,704.2 1185.1,692.0 1185.7,685.0 1186.3,682.9 1186.9,680.6 1187.5,674.2 1188.1,664.2 1188.7,653.7 1189.3,645.1 1189.9,637.9 1190.5,630.5 1191.1,622.1 1191.7,613.7 1192.3,605.2 1192.9,596.5 1193.5,588.7 1194.1,582.3 1194.7,576.3 1195.3,569.4 1195.9,561.7 1196.5,554.4 1197.1,549.1 1197.7,546.0 1198.3,543.6 1198.9,540.4 1199.6,536.4 1200.2,532.8 1200.8,531.2 1201.4,531.8 1202.0,533.3 1202.6,534.1 1203.2,533.8 1203.8,533.4 1204.4,534.0 1205.0,535.9 1205.6,538.2 1206.2,540.3 1206.8,541.9 1207.4,543.3 1208.0,545.2 1208.6,547.8 1209.2,550.8 1209.8,553.6 1210.4,556.3 1211.0,558.9 1211.6,561.7 1212.2,564.7 1212.8,567.8 1213.4,570.8 1214.0,573.7 1214.7,576.6 1215.3,579.5 1215.9,582.3 1216.5,585.0 1217.1,587.6 1217.7,590.1 1218.3,592.4 1218.9,594.4 1219.5,596.4 1220.1,598.2 1220.7,599.8 1221.3,601.2 1221.9,602.3 1222.5,603.1 1223.1,603.7 1223.7,604.1 1224.3,604.4 1224.9,604.4 1225.5,604.3 1226.1,604.1 1226.7,603.8 1227.3,603.6 1227.9,603.2 1228.5,602.9 1229.1,602.4 1229.7,601.9 1230.4,601.3 1231.0,600.7 1231.6,600.1 1232.2,599.4 1232.8,598.6 1233.4,597.9 1234.0,597.1 1234.6,596.3 1235.2,595.5 1235.8,594.6 1236.4,593.8 1237.0,592.9 1237.6,592.1 1238.2,591.3 1238.8,590.5 1239.4,589.7 1240.0,588.9 1240.6,588.1 1241.2,587.4 1241.8,586.8 1242.4,586.1 1243.0,585.5 1243.6,585.0 1244.2,584.5 1244.8,584.1 1245.5,583.7 1246.1,583.4 1246.7,583.2 1247.3,583.0 1247.9,582.8 1248.5,582.8 1249.1,582.8 1249.7,582.8 1250.3,582.9 1250.9,582.9 1251.5,583.0 1252.1,583.1 1252.7,583.2 1253.3,583.3 1253.9,583.5 1254.5,583.6 1255.1,583.8 1255.7,584.0 1256.3,584.2 1256.9,584.4 1257.5,584.6 1258.1,584.9 1258.7,585.1 1259.3,585.3 1259.9,585.6 1260.6,585.8 1261.2,586.0 1261.8,586.3 1262.4,586.5 1263.0,586.7 1263.6,587.0 1264.2,587.2 1264.8,587.4 1265.4,587.6 1266.0,587.8 1266.6,587.9 1267.2,588.1 1267.8,588.2 1268.4,588.3 1269.0,588.5 1269.6,588.5 1270.2,588.6 1270.8,588.7 1271.4,588.7 1272.0,588.7 1272.6,588.7 1273.2,588.7 1273.8,588.7 1274.4,588.7 1275.0,588.7 1275.6,588.7 1276.3,588.7 1276.9,588.7 1277.5,588.7 1278.1,588.7 1278.7,588.6 1279.3,588.6 1279.9,588.6 1280.5,588.6 1281.1,588.6 1281.7,588.6 1282.3,588.5 1282.9,588.5 1283.5,588.5 1284.1,588.5 1284.7,588.5 1285.3,588.4 1285.9,588.4 1286.5,588.4 1287.1,588.4 1287.7,588.3 1288.3,588.3 1288.9,588.3 1289.5,588.3 1290.1,588.3 1290.7,588.2 1291.4,588.2 1292.0,588.2 1292.6,588.2 1293.2,588.2 1293.8,588.1 1294.4,588.1 1295.0,588.1 1295.6,588.1 1296.2,588.1 1296.8,588.1 1297.4,588.0 1298.0,588.0 1298.6,588.0 1299.2,588.0 1299.8,588.0 1300.4,588.0 1301.0,588.0 1301.6,588.0 1302.2,588.0 1302.8,588.0 1303.4,588.0 1304.0,588.0 1304.6,588.0 1305.2,588.0 1305.8,588.0 1306.4,588.0 1307.1,588.0 1307.7,588.0 1308.3,588.0 1308.9,588.0 1309.5,588.0 1310.1,588.0 1310.7,588.0 1311.3,588.0 1311.9,588.0 1312.5,588.0 1313.1,588.0 1313.7,588.0 1314.3,588.0 1314.9,588.0 1315.5,588.0 1316.1,588.0 1316.7,588.0 1317.3,588.0 1317.9,588.0 1318.5,588.0 1319.1,588.0 1319.7,588.0 1320.3,588.0 1320.9,588.0 1321.5,588.0 1322.2,588.0 1322.8,588.0 1323.4,588.0 1324.0,588.0 1324.6,588.0 1325.2,588.0 1325.8,588.0 1326.4,588.0 1327.0,588.0 1327.6,588.0 1328.2,588.0 1328.8,588.0 1329.4,588.0 1330.0,588.0 1330.6,588.0 1331.2,588.0 1331.8,588.0 1332.4,588.0 1333.0,588.0 1333.6,588.0 1334.2,588.0 1334.8,588.0 1335.4,588.0 1336.0,588.0 1336.6,588.0 1337.3,588.0 1337.9,588.0 1338.5,588.0 1339.1,588.0 1339.7,588.0 1340.3,588.0 1340.9,588.0 1341.5,588.0 1342.1,588.0 1342.7,588.0 1343.3,588.0 1343.9,588.0 1344.5,588.0 1345.1,588.0 1345.7,588.0 1346.3,588.0 1346.9,588.0 1347.5,588.0 1348.1,588.0 1348.7,588.0 1349.3,588.0 1349.9,588.0 1350.5,588.0 1351.1,588.0 1351.7,588.0 1352.3,588.0 1353.0,588.0 1353.6,588.0 1354.2,588.0 1354.8,588.0 1355.4,588.0 1356.0,588.0 1356.6,588.0 1357.2,588.0 1357.8,588.0 1358.4,588.0 1359.0,588.0 1359.6,588.0 1360.2,588.0 1360.8,588.0 1361.4,588.0 1362.0,588.0 1362.6,588.0 1363.2,588.0 1363.8,588.0 1364.4,588.0 1365.0,588.0 1365.6,588.0 1366.2,588.0 1366.8,588.0 1367.4,588.0 1368.1,588.0 1368.7,588.0 1369.3,588.0 1369.9,588.0 1370.5,588.0 1371.1,588.0 1371.7,588.0 1372.3,588.0 1372.9,588.0 1373.5,588.0 1374.1,588.0 1374.7,588.0 1375.3,588.0 1375.9,588.0 1376.5,588.0 1377.1,588.0 1377.7,588.0 1378.3,588.0 1378.9,588.0 1379.5,588.0 1380.1,588.0 1380.7,588.0 1381.3,588.0 1381.9,588.0 1382.5,588.0 1383.1,588.0 1383.8,588.0 1384.4,588.0 1385.0,588.0 1385.6,588.0 1386.2,588.0 1386.8,588.0 1387.4,588.0 1388.0,588.0 1388.6,588.0 1389.2,588.0 1389.8,588.0 1390.4,588.0 1391.0,588.0 1391.6,588.0 1392.2,588.0 1392.8,588.0 1393.4,588.0 1394.0,588.0 1394.6,588.0 1395.2,588.0 1395.8,588.0 1396.4,588.0 1397.0,588.0 1397.6,588.0 1398.2,588.0 1398.9,588.0 1399.5,588.0 1400.1,588.0 1400.7,588.0 1401.3,588.0 1401.9,588.0 1402.5,588.0 1403.1,588.0 1403.7,588.0 1404.3,588.0 1404.9,588.0 1405.5,588.0 1406.1,588.0 1406.7,588.0 1407.3,588.0 1407.9,588.0 1408.5,588.0 1409.1,588.0 1409.7,588.0 1410.3,588.0 1410.9,588.0 1411.5,588.0 1412.1,588.0 1412.7,588.0 1413.3,588.0 1414.0,588.0 1414.6,588.0 1415.2,588.0 1415.8,588.0 1416.4,588.0 1417.0,588.0 1417.6,588.0 1418.2,588.0 1418.8,588.0 1419.4,588.0 1420.0,588.0 1420.6,588.0 1421.2,588.0 1421.8,588.0 1422.4,588.0 1423.0,588.0 1423.6,588.0 1424.2,588.0 1424.8,588.0 1425.4,588.0 1426.0,588.0 1426.6,588.0 1427.2,588.0 1427.8,588.0 1428.4,588.0 1429.0,588.0 1429.7,588.0 1430.3,588.0 1430.9,588.0 1431.5,588.0 1432.1,588.0 1432.7,588.0 1433.3,588.0 1433.9,588.0 1434.5,588.0 1435.1,588.0 1435.7,588.0 1436.3,588.0 1436.9,588.0 1437.5,588.0 1438.1,588.0 1438.7,588.0 1439.3,588.0 1439.9,588.0 1440.5,588.0 1441.1,588.0 1441.7,588.0 1442.3,588.0 1442.9,588.0 1443.5,588.0 1444.1,588.0 1444.8,588.0 1445.4,588.0 1446.0,588.0 1446.6,588.0 1447.2,588.0"/>
<polyline fill="none" stroke="#8a8048" stroke-opacity="0.85" stroke-width="1.0" points="843.8,588.0 844.4,588.0 845.0,588.0 845.6,588.0 846.2,588.0 846.9,588.0 847.5,588.0 848.1,588.0 848.7,588.0 849.3,588.0 849.9,588.0 850.5,588.0 851.1,588.0 851.7,588.0 852.3,588.0 852.9,588.0 853.5,588.0 854.1,588.0 854.7,588.0 855.3,588.0 855.9,588.0 856.5,588.0 857.1,588.0 857.7,588.0 858.3,588.0 858.9,588.0 859.5,588.0 860.1,588.0 860.7,588.0 861.3,588.0 862.0,588.0 862.6,588.0 863.2,588.0 863.8,588.0 864.4,588.0 865.0,588.0 865.6,588.0 866.2,588.0 866.8,588.0 867.4,588.0 868.0,588.0 868.6,588.0 869.2,588.0 869.8,588.0 870.4,588.0 871.0,588.0 871.6,588.0 872.2,588.0 872.8,588.0 873.4,588.0 874.0,588.0 874.6,588.0 875.2,588.0 875.8,588.0 876.4,588.0 877.0,588.0 877.7,588.0 878.3,588.0 878.9,588.0 879.5,588.0 880.1,588.0 880.7,588.0 881.3,588.0 881.9,588.0 882.5,588.0 883.1,588.0 883.7,588.0 884.3,588.0 884.9,588.0 885.5,588.0 886.1,588.0 886.7,588.0 887.3,588.0 887.9,588.0 888.5,588.0 889.1,588.0 889.7,588.0 890.3,588.0 890.9,588.0 891.5,588.0 892.1,588.0 892.8,588.0 893.4,588.0 894.0,588.0 894.6,588.0 895.2,588.0 895.8,588.0 896.4,588.0 897.0,588.0 897.6,588.0 898.2,588.0 898.8,588.0 899.4,588.0 900.0,588.0 900.6,588.0 901.2,588.0 901.8,588.0 902.4,588.0 903.0,588.0 903.6,588.0 904.2,588.0 904.8,588.0 905.4,588.0 906.0,588.0 906.6,588.0 907.2,588.0 907.9,588.0 908.5,588.0 909.1,588.0 909.7,588.0 910.3,588.0 910.9,588.0 911.5,588.0 912.1,588.0 912.7,588.0 913.3,588.0 913.9,588.0 914.5,588.0 915.1,588.0 915.7,588.0 916.3,588.0 916.9,588.0 917.5,588.0 918.1,588.0 918.7,588.0 919.3,588.0 919.9,588.0 920.5,588.0 921.1,588.0 921.7,588.0 922.3,588.0 922.9,588.0 923.6,588.0 924.2,588.0 924.8,588.0 925.4,588.0 926.0,588.0 926.6,588.0 927.2,588.0 927.8,588.0 928.4,588.0 929.0,588.0 929.6,588.0 930.2,588.0 930.8,588.0 931.4,588.0 932.0,588.0 932.6,588.0 933.2,588.0 933.8,588.0 934.4,588.0 935.0,588.0 935.6,588.0 936.2,588.0 936.8,588.0 937.4,588.0 938.0,588.0 938.7,588.0 939.3,588.0 939.9,588.0 940.5,588.0 941.1,588.0 941.7,588.0 942.3,588.0 942.9,588.0 943.5,588.0 944.1,588.0 944.7,588.0 945.3,588.0 945.9,588.0 946.5,588.0 947.1,588.0 947.7,588.0 948.3,588.0 948.9,588.0 949.5,588.0 950.1,588.0 950.7,588.0 951.3,588.0 951.9,588.0 952.5,588.0 953.1,588.0 953.7,588.0 954.4,588.0 955.0,588.0 955.6,588.0 956.2,588.0 956.8,588.0 957.4,588.0 958.0,588.0 958.6,588.0 959.2,588.0 959.8,588.0 960.4,588.0 961.0,588.0 961.6,588.0 962.2,588.0 962.8,588.0 963.4,588.0 964.0,588.0 964.6,588.0 965.2,588.0 965.8,588.0 966.4,588.0 967.0,588.0 967.6,588.0 968.2,588.0 968.8,588.0 969.5,588.0 970.1,588.0 970.7,588.0 971.3,588.0 971.9,588.0 972.5,588.0 973.1,588.0 973.7,588.0 974.3,588.0 974.9,588.0 975.5,588.0 976.1,588.0 976.7,588.0 977.3,588.0 977.9,588.0 978.5,588.0 979.1,588.0 979.7,588.0 980.3,588.0 980.9,588.0 981.5,588.0 982.1,588.0 982.7,588.0 983.3,588.0 983.9,588.0 984.6,588.0 985.2,588.0 985.8,588.0 986.4,588.0 987.0,588.0 987.6,588.0 988.2,588.0 988.8,588.0 989.4,588.0 990.0,588.0 990.6,588.0 991.2,588.0 991.8,588.0 992.4,588.0 993.0,588.0 993.6,588.0 994.2,587.9 994.8,587.9 995.4,587.9 996.0,587.9 996.6,587.9 997.2,587.9 997.8,587.9 998.4,587.8 999.0,587.8 999.6,587.8 1000.3,587.8 1000.9,587.8 1001.5,587.7 1002.1,587.7 1002.7,587.7 1003.3,587.7 1003.9,587.7 1004.5,587.6 1005.1,587.6 1005.7,587.6 1006.3,587.6 1006.9,587.5 1007.5,587.5 1008.1,587.5 1008.7,587.5 1009.3,587.5 1009.9,587.4 1010.5,587.4 1011.1,587.4 1011.7,587.4 1012.3,587.3 1012.9,587.3 1013.5,587.3 1014.1,587.3 1014.7,587.3 1015.4,587.2 1016.0,587.2 1016.6,587.2 1017.2,587.2 1017.8,587.2 1018.4,587.2 1019.0,587.2 1019.6,587.1 1020.2,587.1 1020.8,587.1 1021.4,587.1 1022.0,587.1 1022.6,587.1 1023.2,587.1 1023.8,587.1 1024.4,587.1 1025.0,587.1 1025.6,587.1 1026.2,587.2 1026.8,587.3 1027.4,587.4 1028.0,587.5 1028.6,587.7 1029.2,587.9 1029.8,588.1 1030.4,588.3 1031.1,588.5 1031.7,588.8 1032.3,589.0 1032.9,589.3 1033.5,589.5 1034.1,589.8 1034.7,590.0 1035.3,590.2 1035.9,590.4 1036.5,590.6 1037.1,590.7 1037.7,590.8 1038.3,590.9 1038.9,591.0 1039.5,591.0 1040.1,591.1 1040.7,591.0 1041.3,590.9 1041.9,590.7 1042.5,590.4 1043.1,590.1 1043.7,589.7 1044.3,589.3 1044.9,588.8 1045.5,588.2 1046.2,587.6 1046.8,587.0 1047.4,586.3 1048.0,585.6 1048.6,584.8 1049.2,584.0 1049.8,583.2 1050.4,582.4 1051.0,581.6 1051.6,580.7 1052.2,579.9 1052.8,579.1 1053.4,578.3 1054.0,577.5 1054.6,576.7 1055.2,576.0 1055.8,575.3 1056.4,574.6 1057.0,574.0 1057.6,573.4 1058.2,572.9 1058.8,572.5 1059.4,572.0 1060.0,571.7 1060.6,571.4 1061.3,571.2 1061.9,571.1 1062.5,571.0 1063.1,570.9 1063.7,571.0 1064.3,571.4 1064.9,571.9 1065.5,572.6 1066.1,573.5 1066.7,574.5 1067.3,575.6 1067.9,576.9 1068.5,578.4 1069.1,580.1 1069.7,581.9 1070.3,583.8 1070.9,585.8 1071.5,587.9 1072.1,590.1 1072.7,592.4 1073.3,594.8 1073.9,597.2 1074.5,599.7 1075.1,602.1 1075.7,604.6 1076.3,607.3 1077.0,609.9 1077.6,612.5 1078.2,614.8 1078.8,617.0 1079.4,619.3 1080.0,621.9 1080.6,624.5 1081.2,626.8 1081.8,628.6 1082.4,630.0 1083.0,631.5 1083.6,633.5 1084.2,635.8 1084.8,637.6 1085.4,638.5 1086.0,638.7 1086.6,639.0 1087.2,640.1 1087.8,641.6 1088.4,642.7 1089.0,642.7 1089.6,641.7 1090.2,640.3 1090.8,639.4 1091.4,638.9 1092.1,637.6 1092.7,635.0 1093.3,631.1 1093.9,626.9 1094.5,623.0 1095.1,619.1 1095.7,614.7 1096.3,609.4 1096.9,603.9 1097.5,597.9 1098.1,591.6 1098.7,585.6 1099.3,580.4 1099.9,574.8 1100.5,567.7 1101.1,559.1 1101.7,550.8 1102.3,545.1 1102.9,541.9 1103.5,538.4 1104.1,531.6 1104.7,521.5 1105.3,512.0 1105.9,507.1 1106.5,507.3 1107.1,508.0 1107.8,504.0 1108.4,494.6 1109.0,484.9 1109.6,481.1 1110.2,484.7 1110.8,490.2 1111.4,490.8 1112.0,484.5 1112.6,476.7 1113.2,475.1 1113.8,482.3 1114.4,493.4 1115.0,501.4 1115.6,504.3 1116.2,506.1 1116.8,512.5 1117.4,525.0 1118.0,540.1 1118.6,553.5 1119.2,564.5 1119.8,576.1 1120.4,589.6 1121.0,602.5 1121.6,617.7 1122.2,634.8 1122.9,649.3 1123.5,658.3 1124.1,664.5 1124.7,674.9 1125.3,693.0 1125.9,713.7 1126.5,726.4 1127.1,726.1 1127.7,719.4 1128.3,719.5 1128.9,733.3 1129.5,753.0 1130.1,762.6 1130.7,753.4 1131.3,733.8 1131.9,721.5 1132.5,726.6 1133.1,742.0 1133.7,749.5 1134.3,737.7 1134.9,712.7 1135.5,692.3 1136.1,688.2 1136.7,695.7 1137.3,698.8 1138.0,686.7 1138.6,663.0 1139.2,641.1 1139.8,630.1 1140.4,627.5 1141.0,623.0 1141.6,610.5 1142.2,592.8 1142.8,576.7 1143.4,565.0 1144.0,554.3 1144.6,543.2 1145.2,533.6 1145.8,521.0 1146.4,504.3 1147.0,488.9 1147.6,481.5 1148.2,481.6 1148.8,480.4 1149.4,469.1 1150.0,449.1 1150.6,432.1 1151.2,429.1 1151.8,438.7 1152.4,447.7 1153.0,443.5 1153.7,426.8 1154.3,411.4 1154.9,411.0 1155.5,425.8 1156.1,442.3 1156.7,446.8 1157.3,438.0 1157.9,427.9 1158.5,429.4 1159.1,444.7 1159.7,463.5 1160.3,474.3 1160.9,474.8 1161.5,472.8 1162.1,477.8 1162.7,491.6 1163.3,508.4 1163.9,521.4 1164.5,529.0 1165.1,535.4 1165.7,544.6 1166.3,556.9 1166.9,569.6 1167.5,580.6 1168.1,592.0 1168.8,602.4 1169.4,611.6 1170.0,621.6 1170.6,634.0 1171.2,647.2 1171.8,657.6 1172.4,663.7 1173.0,668.2 1173.6,675.0 1174.2,685.7 1174.8,697.4 1175.4,705.5 1176.0,708.0 1176.6,707.8 1177.2,709.5 1177.8,715.2 1178.4,722.4 1179.0,726.5 1179.6,725.4 1180.2,721.3 1180.8,718.0 1181.4,717.7 1182.0,718.8 1182.6,718.2 1183.2,713.9 1183.9,707.2 1184.5,700.5 1185.1,695.3 1185.7,691.1 1186.3,685.9 1186.9,679.0 1187.5,670.6 1188.1,662.2 1188.7,654.3 1189.3,646.7 1189.9,638.8 1190.5,630.4 1191.1,621.9 1191.7,613.5 1192.3,605.2 1192.9,597.2 1193.5,589.7 1194.1,582.4 1194.7,575.1 1195.3,567.9 1195.9,561.3 1196.5,555.6 1197.1,550.9 1197.7,546.6 1198.3,542.5 1198.9,538.7 1199.6,535.6 1200.2,533.7 1200.8,532.8 1201.4,532.7 1202.0,532.8 1202.6,532.8 1203.2,533.0 1203.8,533.7 1204.4,535.0 1205.0,536.6 1205.6,538.1 1206.2,539.6 1206.8,541.3 1207.4,543.3 1208.0,545.7 1208.6,548.2 1209.2,550.8 1209.8,553.4 1210.4,556.1 1211.0,558.9 1211.6,561.8 1212.2,564.8 1212.8,567.8 1213.4,570.8 1214.0,573.7 1214.7,576.6 1215.3,579.5 1215.9,582.3 1216.5,585.0 1217.1,587.6 1217.7,590.0 1218.3,592.3 1218.9,594.5 1219.5,596.4 1220.1,598.2 1220.7,599.8 1221.3,601.1 1221.9,602.2 1222.5,603.1 1223.1,603.8 1223.7,604.2 1224.3,604.4 1224.9,604.3 1225.5,604.2 1226.1,604.1 1226.7,603.9 1227.3,603.6 1227.9,603.3 1228.5,602.9 1229.1,602.4 1229.7,601.9 1230.4,601.3 1231.0,600.7 1231.6,600.1 1232.2,599.4 1232.8,598.6 1233.4,597.9 1234.0,597.1 1234.6,596.3 1235.2,595.5 1235.8,594.6 1236.4,593.8 1237.0,592.9 1237.6,592.1 1238.2,591.3 1238.8,590.5 1239.4,589.7 1240.0,588.9 1240.6,588.1 1241.2,587.4 1241.8,586.8 1242.4,586.1 1243.0,585.5 1243.6,585.0 1244.2,584.5 1244.8,584.1 1245.5,583.7 1246.1,583.4 1246.7,583.2 1247.3,583.0 1247.9,582.8 1248.5,582.8 1249.1,582.8 1249.7,582.8 1250.3,582.9 1250.9,582.9 1251.5,583.0 1252.1,583.1 1252.7,583.2 1253.3,583.3 1253.9,583.5 1254.5,583.6 1255.1,583.8 1255.7,584.0 1256.3,584.2 1256.9,584.4 1257.5,584.6 1258.1,584.9 1258.7,585.1 1259.3,585.3 1259.9,585.6 1260.6,585.8 1261.2,586.0 1261.8,586.3 1262.4,586.5 1263.0,586.7 1263.6,587.0 1264.2,587.2 1264.8,587.4 1265.4,587.6 1266.0,587.8 1266.6,587.9 1267.2,588.1 1267.8,588.2 1268.4,588.3 1269.0,588.5 1269.6,588.5 1270.2,588.6 1270.8,588.7 1271.4,588.7 1272.0,588.7 1272.6,588.7 1273.2,588.7 1273.8,588.7 1274.4,588.7 1275.0,588.7 1275.6,588.7 1276.3,588.7 1276.9,588.7 1277.5,588.7 1278.1,588.7 1278.7,588.6 1279.3,588.6 1279.9,588.6 1280.5,588.6 1281.1,588.6 1281.7,588.6 1282.3,588.5 1282.9,588.5 1283.5,588.5 1284.1,588.5 1284.7,588.5 1285.3,588.4 1285.9,588.4 1286.5,588.4 1287.1,588.4 1287.7,588.3 1288.3,588.3 1288.9,588.3 1289.5,588.3 1290.1,588.3 1290.7,588.2 1291.4,588.2 1292.0,588.2 1292.6,588.2 1293.2,588.2 1293.8,588.1 1294.4,588.1 1295.0,588.1 1295.6,588.1 1296.2,588.1 1296.8,588.1 1297.4,588.0 1298.0,588.0 1298.6,588.0 1299.2,588.0 1299.8,588.0 1300.4,588.0 1301.0,588.0 1301.6,588.0 1302.2,588.0 1302.8,588.0 1303.4,588.0 1304.0,588.0 1304.6,588.0 1305.2,588.0 1305.8,588.0 1306.4,588.0 1307.1,588.0 1307.7,588.0 1308.3,588.0 1308.9,588.0 1309.5,588.0 1310.1,588.0 1310.7,588.0 1311.3,588.0 1311.9,588.0 1312.5,588.0 1313.1,588.0 1313.7,588.0 1314.3,588.0 1314.9,588.0 1315.5,588.0 1316.1,588.0 1316.7,588.0 1317.3,588.0 1317.9,588.0 1318.5,588.0 1319.1,588.0 1319.7,588.0 1320.3,588.0 1320.9,588.0 1321.5,588.0 1322.2,588.0 1322.8,588.0 1323.4,588.0 1324.0,588.0 1324.6,588.0 1325.2,588.0 1325.8,588.0 1326.4,588.0 1327.0,588.0 1327.6,588.0 1328.2,588.0 1328.8,588.0 1329.4,588.0 1330.0,588.0 1330.6,588.0 1331.2,588.0 1331.8,588.0 1332.4,588.0 1333.0,588.0 1333.6,588.0 1334.2,588.0 1334.8,588.0 1335.4,588.0 1336.0,588.0 1336.6,588.0 1337.3,588.0 1337.9,588.0 1338.5,588.0 1339.1,588.0 1339.7,588.0 1340.3,588.0 1340.9,588.0 1341.5,588.0 1342.1,588.0 1342.7,588.0 1343.3,588.0 1343.9,588.0 1344.5,588.0 1345.1,588.0 1345.7,588.0 1346.3,588.0 1346.9,588.0 1347.5,588.0 1348.1,588.0 1348.7,588.0 1349.3,588.0 1349.9,588.0 1350.5,588.0 1351.1,588.0 1351.7,588.0 1352.3,588.0 1353.0,588.0 1353.6,588.0 1354.2,588.0 1354.8,588.0 1355.4,588.0 1356.0,588.0 1356.6,588.0 1357.2,588.0 1357.8,588.0 1358.4,588.0 1359.0,588.0 1359.6,588.0 1360.2,588.0 1360.8,588.0 1361.4,588.0 1362.0,588.0 1362.6,588.0 1363.2,588.0 1363.8,588.0 1364.4,588.0 1365.0,588.0 1365.6,588.0 1366.2,588.0 1366.8,588.0 1367.4,588.0 1368.1,588.0 1368.7,588.0 1369.3,588.0 1369.9,588.0 1370.5,588.0 1371.1,588.0 1371.7,588.0 1372.3,588.0 1372.9,588.0 1373.5,588.0 1374.1,588.0 1374.7,588.0 1375.3,588.0 1375.9,588.0 1376.5,588.0 1377.1,588.0 1377.7,588.0 1378.3,588.0 1378.9,588.0 1379.5,588.0 1380.1,588.0 1380.7,588.0 1381.3,588.0 1381.9,588.0 1382.5,588.0 1383.1,588.0 1383.8,588.0 1384.4,588.0 1385.0,588.0 1385.6,588.0 1386.2,588.0 1386.8,588.0 1387.4,588.0 1388.0,588.0 1388.6,588.0 1389.2,588.0 1389.8,588.0 1390.4,588.0 1391.0,588.0 1391.6,588.0 1392.2,588.0 1392.8,588.0 1393.4,588.0 1394.0,588.0 1394.6,588.0 1395.2,588.0 1395.8,588.0 1396.4,588.0 1397.0,588.0 1397.6,588.0 1398.2,588.0 1398.9,588.0 1399.5,588.0 1400.1,588.0 1400.7,588.0 1401.3,588.0 1401.9,588.0 1402.5,588.0 1403.1,588.0 1403.7,588.0 1404.3,588.0 1404.9,588.0 1405.5,588.0 1406.1,588.0 1406.7,588.0 1407.3,588.0 1407.9,588.0 1408.5,588.0 1409.1,588.0 1409.7,588.0 1410.3,588.0 1410.9,588.0 1411.5,588.0 1412.1,588.0 1412.7,588.0 1413.3,588.0 1414.0,588.0 1414.6,588.0 1415.2,588.0 1415.8,588.0 1416.4,588.0 1417.0,588.0 1417.6,588.0 1418.2,588.0 1418.8,588.0 1419.4,588.0 1420.0,588.0 1420.6,588.0 1421.2,588.0 1421.8,588.0 1422.4,588.0 1423.0,588.0 1423.6,588.0 1424.2,588.0 1424.8,588.0 1425.4,588.0 1426.0,588.0 1426.6,588.0 1427.2,588.0 1427.8,588.0 1428.4,588.0 1429.0,588.0 1429.7,588.0 1430.3,588.0 1430.9,588.0 1431.5,588.0 1432.1,588.0 1432.7,588.0 1433.3,588.0 1433.9,588.0 1434.5,588.0 1435.1,588.0 1435.7,588.0 1436.3,588.0 1436.9,588.0 1437.5,588.0 1438.1,588.0 1438.7,588.0 1439.3,588.0 1439.9,588.0 1440.5,588.0 1441.1,588.0 1441.7,588.0 1442.3,588.0 1442.9,588.0 1443.5,588.0 1444.1,588.0 1444.8,588.0 1445.4,588.0 1446.0,588.0 1446.6,588.0 1447.2,588.0"/>
<rect x="783.5" y="318.5" width="724.0" height="539.0" fill="none" stroke="#8a8a8a" stroke-width="1"/>
<text x="783.5" y="873.8" text-anchor="middle" font-size="10" fill="#262626">-6</text>
<text x="904.2" y="873.8" text-anchor="middle" font-size="10" fill="#262626">-4</text>
<text x="1024.8" y="873.8" text-anchor="middle" font-size="10" fill="#262626">-2</text>
<text x="1145.5" y="873.8" text-anchor="middle" font-size="10" fill="#262626">0</text>
<text x="1266.2" y="873.8" text-anchor="middle" font-size="10" fill="#262626">2</text>
<text x="1386.8" y="873.8" text-anchor="middle" font-size="10" fill="#262626">4</text>
<text x="1507.5" y="873.8" text-anchor="middle" font-size="10" fill="#262626">6</text>
<text x="777.5" y="862.1" text-anchor="end" font-size="10" fill="#262626">-1.5</text>
<text x="777.5" y="772.3" text-anchor="end" font-size="10" fill="#262626">-1</text>
<text x="777.5" y="682.4" text-anchor="end" font-size="10" fill="#262626">-0.5</text>
<text x="777.5" y="592.6" text-anchor="end" font-size="10" fill="#262626">0</text>
<text x="777.5" y="502.8" text-anchor="end" font-size="10" fill="#262626">0.5</text>
<text x="777.5" y="412.9" text-anchor="end" font-size="10" fill="#262626">1</text>
<text x="777.5" y="323.1" text-anchor="end" font-size="10" fill="#262626">1.5</text>
<path d="M783.5 857.5v-7M783.5 318.5v7M904.5 857.5v-7M904.5 318.5v7M1024.5 857.5v-7M1024.5 318.5v7M1145.5 857.5v-7M1145.5 318.5v7M1266.5 857.5v-7M1266.5 318.5v7M1386.5 857.5v-7M1386.5 318.5v7M1507.5 857.5v-7M1507.5 318.5v7M783.5 857.5h7M1507.5 857.5h-7M783.5 767.5h7M1507.5 767.5h-7M783.5 677.5h7M1507.5 677.5h-7M783.5 588.5h7M1507.5 588.5h-7M783.5 498.5h7M1507.5 498.5h-7M783.5 408.5h7M1507.5 408.5h-7M783.5 318.5h7M1507.5 318.5h-7" stroke="#111" stroke-width="1"/>
<text x="1145" y="307.5" text-anchor="middle" font-size="10" letter-spacing="0.6" font-weight="bold" fill="#111">Gaussian-Modulated Sine Wave</text>
<text x="1144.5" y="884.5" text-anchor="middle" font-size="10" fill="#262626">x</text>
<text transform="translate(753 588) rotate(-90)" text-anchor="middle" font-size="10" fill="#262626">Amplitude</text>
</svg>
  </div>
  <div class="a ui" style="left:7px;top:747px;color:#f0f0f0;letter-spacing:-0.5px">(-5.8578, 0.77926)</div>
  <svg class="a" style="left:921px;top:751px" width="14" height="14" viewBox="0 0 14 14">
 <g fill="#7a7a7a"><rect x="10" y="2" width="2" height="2"/><rect x="7" y="5" width="2" height="2"/><rect x="10" y="5" width="2" height="2"/><rect x="4" y="8" width="2" height="2"/><rect x="7" y="8" width="2" height="2"/><rect x="10" y="8" width="2" height="2"/><rect x="1" y="11" width="2" height="2"/><rect x="4" y="11" width="2" height="2"/><rect x="7" y="11" width="2" height="2"/><rect x="10" y="11" width="2" height="2"/></g>
</svg>

</div>

</body></html>
